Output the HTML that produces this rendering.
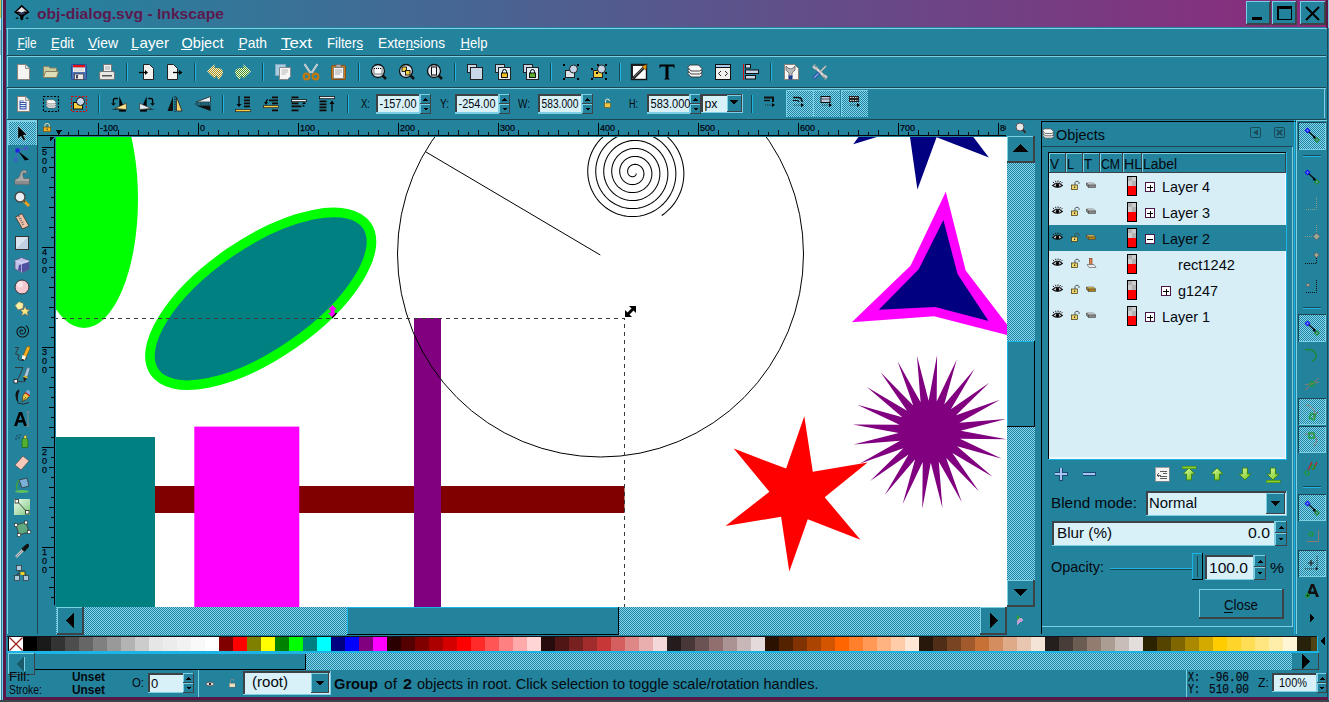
<!DOCTYPE html>
<html><head><meta charset="utf-8"><style>html,body{margin:0;padding:0;overflow:hidden;background:#23839d}svg{display:block}</style></head>
<body><svg width="1329" height="702" viewBox="0 0 1329 702" shape-rendering="crispEdges"><defs>
<linearGradient id="tg" x1="0" y1="0" x2="1" y2="0"><stop offset="0" stop-color="#22859f"/><stop offset="1" stop-color="#8c2a7b"/></linearGradient>
<pattern id="hatch" width="2" height="2" patternUnits="userSpaceOnUse"><rect width="2" height="2" fill="#84d6ec"/><rect width="1" height="1" fill="#2183a0"/><rect x="1" y="1" width="1" height="1" fill="#2183a0"/></pattern>
<linearGradient id="ggrad" x1="0" y1="0" x2="1" y2="1"><stop offset="0" stop-color="#fff" stop-opacity="0.6"/><stop offset="1" stop-color="#60b860" stop-opacity="0.8"/></linearGradient>
<pattern id="dithY" width="2" height="2" patternUnits="userSpaceOnUse"><rect width="2" height="2" fill="#f4f0e0"/><rect width="1" height="1" fill="#a89018"/><rect x="1" y="1" width="1" height="1" fill="#a89018"/></pattern>
<pattern id="dithG" width="2" height="2" patternUnits="userSpaceOnUse"><rect width="2" height="2" fill="#eef4e8"/><rect width="1" height="1" fill="#409020"/><rect x="1" y="1" width="1" height="1" fill="#409020"/></pattern>
<linearGradient id="garr" x1="0" y1="0" x2="1" y2="1"><stop offset="0" stop-color="#e0ffb0"/><stop offset="1" stop-color="#70c010"/></linearGradient>
<clipPath id="cvclip"><rect x="56" y="137" width="951" height="470"/></clipPath>
<clipPath id="rulclip"><rect x="56" y="120" width="950" height="15"/></clipPath>
</defs>
<rect x="0" y="0" width="1329" height="702" fill="#23839d" />
<rect x="6" y="0" width="1320" height="27" fill="url(#tg)" />
<rect x="0" y="0" width="1" height="702" fill="#d0eef4" />
<rect x="0" y="0" width="1" height="18" fill="#e0c040" />
<rect x="0" y="30" width="1" height="25" fill="#a0b8c8" />
<rect x="2" y="0" width="1" height="702" fill="#7dd0e3" />
<rect x="3" y="0" width="3" height="697" fill="#5a1848" />
<rect x="1326" y="0" width="2" height="28" fill="#5a1848" />
<rect x="1328" y="0" width="1" height="28" fill="#7dd0e3" />
<rect x="1327" y="28" width="1" height="669" fill="#1d4654" />
<rect x="3" y="697" width="1325" height="3" fill="#5a1848" />
<rect x="0" y="700" width="1329" height="2" fill="#39464a" />
<text x="37" y="19" font-family="Liberation Sans" font-size="15" font-weight="bold" fill="#5b1a4e" text-anchor="start" textLength="187" lengthAdjust="spacingAndGlyphs" >obj-dialog.svg - Inkscape</text>
<g shape-rendering="geometricPrecision"><path d="M21.8 4.8 L29.6 12.3 L26 14.6 L23.6 16.2 L23.2 19.2 L21.8 20.6 L20.4 19.2 L20 16.2 L17.6 14.6 L14 12.3 Z" fill="#000"/><path d="M21.8 6.9 L27.2 12 L24.5 11.2 L21.5 12.8 L18.8 11.6 L16.4 12 Z" fill="#e4e4e8"/><path d="M19 12.5 L21.5 13 L24 12 L25.5 13.5 L21.8 15 L18 13.5 Z" fill="#2a3a6a"/><rect x="15.8" y="17.6" width="2.4" height="1.2" fill="#000"/><rect x="26" y="17.6" width="2.4" height="1.2" fill="#000"/></g>
<rect x="1246" y="1" width="25" height="24" fill="#23839d" />
<rect x="1246" y="1" width="25" height="1" fill="#7dd0e3" />
<rect x="1246" y="1" width="1" height="24" fill="#7dd0e3" />
<rect x="1246" y="24" width="25" height="1" fill="#3c4246" />
<rect x="1270" y="1" width="1" height="24" fill="#3c4246" />
<rect x="1247" y="23" width="24" height="1" fill="#3c4246" />
<rect x="1269" y="2" width="1" height="23" fill="#3c4246" />
<rect x="1272" y="1" width="25" height="24" fill="#23839d" />
<rect x="1272" y="1" width="25" height="1" fill="#7dd0e3" />
<rect x="1272" y="1" width="1" height="24" fill="#7dd0e3" />
<rect x="1272" y="24" width="25" height="1" fill="#3c4246" />
<rect x="1296" y="1" width="1" height="24" fill="#3c4246" />
<rect x="1273" y="23" width="24" height="1" fill="#3c4246" />
<rect x="1295" y="2" width="1" height="23" fill="#3c4246" />
<rect x="1300" y="1" width="26" height="24" fill="#23839d" />
<rect x="1300" y="1" width="26" height="1" fill="#7dd0e3" />
<rect x="1300" y="1" width="1" height="24" fill="#7dd0e3" />
<rect x="1300" y="24" width="26" height="1" fill="#3c4246" />
<rect x="1325" y="1" width="1" height="24" fill="#3c4246" />
<rect x="1301" y="23" width="25" height="1" fill="#3c4246" />
<rect x="1324" y="2" width="1" height="23" fill="#3c4246" />
<rect x="1252" y="17" width="10" height="3" fill="#000" />
<rect x="1277.75" y="6.75" width="13.5" height="12.5" fill="none" stroke="#000" stroke-width="1.5"/>
<rect x="1277" y="6" width="15" height="3" fill="#000" />
<path d="M1306 7 L1319 20 M1319 7 L1306 20" stroke="#000" stroke-width="2" shape-rendering="geometricPrecision"/>
<rect x="6" y="28" width="1321" height="1" fill="#7dd0e3" />
<rect x="7" y="28" width="1" height="27" fill="#7dd0e3" />
<rect x="7" y="55" width="1319" height="1" fill="#1d4654" />
<text x="17.5" y="48" font-family="Liberation Sans" font-size="15" font-weight="normal" fill="#ffffff" text-anchor="start" textLength="19" lengthAdjust="spacingAndGlyphs" >File</text>
<text x="51" y="48" font-family="Liberation Sans" font-size="15" font-weight="normal" fill="#ffffff" text-anchor="start" textLength="23" lengthAdjust="spacingAndGlyphs" >Edit</text>
<text x="88" y="48" font-family="Liberation Sans" font-size="15" font-weight="normal" fill="#ffffff" text-anchor="start" textLength="30" lengthAdjust="spacingAndGlyphs" >View</text>
<text x="131" y="48" font-family="Liberation Sans" font-size="15" font-weight="normal" fill="#ffffff" text-anchor="start" textLength="38" lengthAdjust="spacingAndGlyphs" >Layer</text>
<text x="181.5" y="48" font-family="Liberation Sans" font-size="15" font-weight="normal" fill="#ffffff" text-anchor="start" textLength="42" lengthAdjust="spacingAndGlyphs" >Object</text>
<text x="238.5" y="48" font-family="Liberation Sans" font-size="15" font-weight="normal" fill="#ffffff" text-anchor="start" textLength="28.5" lengthAdjust="spacingAndGlyphs" >Path</text>
<text x="281" y="48" font-family="Liberation Sans" font-size="15" font-weight="normal" fill="#ffffff" text-anchor="start" textLength="31" lengthAdjust="spacingAndGlyphs" >Text</text>
<text x="327" y="48" font-family="Liberation Sans" font-size="15" font-weight="normal" fill="#ffffff" text-anchor="start" textLength="36" lengthAdjust="spacingAndGlyphs" >Filters</text>
<text x="378" y="48" font-family="Liberation Sans" font-size="15" font-weight="normal" fill="#ffffff" text-anchor="start" textLength="67" lengthAdjust="spacingAndGlyphs" >Extensions</text>
<text x="460.5" y="48" font-family="Liberation Sans" font-size="15" font-weight="normal" fill="#ffffff" text-anchor="start" textLength="27" lengthAdjust="spacingAndGlyphs" >Help</text>
<rect x="17" y="49" width="8" height="1" fill="#ffffff" />
<rect x="51" y="49" width="8" height="1" fill="#ffffff" />
<rect x="88" y="49" width="9" height="1" fill="#ffffff" />
<rect x="131" y="49" width="7" height="1" fill="#ffffff" />
<rect x="181" y="49" width="11" height="1" fill="#ffffff" />
<rect x="238" y="49" width="8" height="1" fill="#ffffff" />
<rect x="281" y="49" width="10" height="1" fill="#ffffff" />
<rect x="356" y="49" width="7" height="1" fill="#ffffff" />
<rect x="406" y="49" width="8" height="1" fill="#ffffff" />
<rect x="460" y="49" width="10" height="1" fill="#ffffff" />
<rect x="7" y="56" width="1319" height="1" fill="#7dd0e3" />
<rect x="7" y="56" width="1" height="32" fill="#7dd0e3" />
<rect x="7" y="87" width="1319" height="1" fill="#1d4654" />
<rect x="7" y="88" width="1319" height="1" fill="#7dd0e3" />
<rect x="7" y="88" width="1" height="32" fill="#7dd0e3" />
<rect x="7" y="119" width="1319" height="1" fill="#1d4654" />
<rect x="126" y="63" width="1" height="18" fill="#1d4654" />
<rect x="127" y="63" width="1" height="18" fill="#1cb4e4" />
<rect x="194" y="63" width="1" height="18" fill="#1d4654" />
<rect x="195" y="63" width="1" height="18" fill="#1cb4e4" />
<rect x="262" y="63" width="1" height="18" fill="#1d4654" />
<rect x="263" y="63" width="1" height="18" fill="#1cb4e4" />
<rect x="358" y="63" width="1" height="18" fill="#1d4654" />
<rect x="359" y="63" width="1" height="18" fill="#1cb4e4" />
<rect x="454" y="63" width="1" height="18" fill="#1d4654" />
<rect x="455" y="63" width="1" height="18" fill="#1cb4e4" />
<rect x="550" y="63" width="1" height="18" fill="#1d4654" />
<rect x="551" y="63" width="1" height="18" fill="#1cb4e4" />
<rect x="619" y="63" width="1" height="18" fill="#1d4654" />
<rect x="620" y="63" width="1" height="18" fill="#1cb4e4" />
<rect x="770" y="63" width="1" height="18" fill="#1d4654" />
<rect x="771" y="63" width="1" height="18" fill="#1cb4e4" />
<rect x="98" y="95" width="1" height="18" fill="#1d4654" />
<rect x="99" y="95" width="1" height="18" fill="#1cb4e4" />
<rect x="222" y="95" width="1" height="18" fill="#1d4654" />
<rect x="223" y="95" width="1" height="18" fill="#1cb4e4" />
<rect x="347" y="95" width="1" height="18" fill="#1d4654" />
<rect x="348" y="95" width="1" height="18" fill="#1cb4e4" />
<rect x="751" y="95" width="1" height="18" fill="#1d4654" />
<rect x="752" y="95" width="1" height="18" fill="#1cb4e4" />
<rect x="786" y="90" width="27" height="27" fill="url(#hatch)" />
<rect x="786" y="90" width="27" height="1" fill="#7dd0e3" />
<rect x="786" y="90" width="1" height="27" fill="#7dd0e3" />
<rect x="813" y="90" width="27" height="27" fill="url(#hatch)" />
<rect x="813" y="90" width="27" height="1" fill="#7dd0e3" />
<rect x="813" y="90" width="1" height="27" fill="#7dd0e3" />
<rect x="841" y="90" width="27" height="27" fill="url(#hatch)" />
<rect x="841" y="90" width="27" height="1" fill="#7dd0e3" />
<rect x="841" y="90" width="1" height="27" fill="#7dd0e3" />
<g transform="translate(16 64)" shape-rendering="geometricPrecision"><path d="M1.5 0.5 H9.5 L13.5 4.5 V15.5 H1.5 Z" fill="#f4f4f2" stroke="#8a8078" stroke-width="1"/><path d="M9.5 0.5 V4.5 H13.5" fill="#ddd" stroke="#8a8078" stroke-width="0.8"/></g>
<g transform="translate(43 64)" shape-rendering="geometricPrecision"><path d="M0.5 2.5 H5.5 L7 4 H13.5 V13.5 H0.5 Z" fill="#c8cca0" stroke="#8a8060" stroke-width="1"/><path d="M2.5 7.5 H15.5 L13.5 13.5 H0.5 Z" fill="#dcdfb8" stroke="#8a8060" stroke-width="1"/></g>
<g transform="translate(71 64)" shape-rendering="geometricPrecision"><rect x="0.5" y="0.5" width="15" height="15" rx="1" fill="#4a70b8" stroke="#2a4a90" stroke-width="1"/><rect x="2" y="1" width="12" height="2.5" fill="#e01010"/><rect x="2" y="3.5" width="12" height="4.5" fill="#f0f0f0"/><path d="M3 5 H13 M3 6.8 H13" stroke="#bbb" stroke-width="0.6"/><rect x="3.5" y="10" width="9" height="5.5" fill="#e8e8e8" stroke="#444" stroke-width="0.8"/><rect x="5" y="11" width="2" height="3.5" fill="#446"/></g>
<g transform="translate(99 64)" shape-rendering="geometricPrecision"><rect x="4.5" y="0.5" width="8" height="7" fill="#f0f0f0" stroke="#777" stroke-width="1"/><path d="M6 3 H11 M6 5 H11" stroke="#999" stroke-width="0.8"/><rect x="0.5" y="7.5" width="15" height="8" rx="1.5" fill="#e8e8e4" stroke="#777" stroke-width="1"/><rect x="3" y="11" width="10" height="1.5" fill="#555"/></g>
<g transform="translate(139 64)" shape-rendering="geometricPrecision"><path d="M4.5 0.5 H10.5 L14.5 4.5 V15.5 H4.5 Z" fill="#f2f2ee" stroke="#222" stroke-width="1"/><path d="M0 8.5 H7" stroke="#000" stroke-width="1.3"/><path d="M6 6 L9 8.5 L6 11 Z" fill="#000"/></g>
<g transform="translate(167 64)" shape-rendering="geometricPrecision"><path d="M0.5 0.5 H6.5 L10.5 4.5 V15.5 H0.5 Z" fill="#f2f2ee" stroke="#222" stroke-width="1"/><path d="M6 8.5 H12" stroke="#000" stroke-width="1.3"/><path d="M12 6 L15.5 8.5 L12 11 Z" fill="#000"/></g>
<g transform="translate(207 64)" shape-rendering="geometricPrecision"><path d="M0 7.3 L7.7 0.3 V4 H11 Q16 4.5 16 8.5 Q15.5 12 11.5 15.8 L9.5 11.5 L7.7 14.4 Z" fill="url(#dithY)"/></g>
<g transform="translate(235 64)" shape-rendering="geometricPrecision"><g transform="translate(16 0) scale(-1 1)"><path d="M0 7.3 L7.7 0.3 V4 H11 Q16 4.5 16 8.5 Q15.5 12 11.5 15.8 L9.5 11.5 L7.7 14.4 Z" fill="url(#dithG)"/></g></g>
<g transform="translate(275 64)" shape-rendering="geometricPrecision"><rect x="0.5" y="0.5" width="10" height="11" fill="#a8cce0" stroke="#80a8c0" stroke-width="1"/><path d="M4.5 3.5 H15.5 V12.5 L12.5 15.5 H4.5 Z" fill="#f6f6f6" stroke="#888" stroke-width="1"/><path d="M6.5 6 H13 M6.5 8 H13 M6.5 10 H11" stroke="#aaa" stroke-width="0.8"/></g>
<g transform="translate(303 64)" shape-rendering="geometricPrecision"><path d="M1.5 0 L7.5 9 M14.5 0 L8.5 9" stroke="#e8e8e8" stroke-width="2"/><path d="M1.5 0 L7.5 9 M14.5 0 L8.5 9" stroke="#888" stroke-width="0.5"/><circle cx="3.5" cy="12.5" r="2.8" fill="none" stroke="#c07810" stroke-width="2.2"/><circle cx="12.5" cy="12.5" r="2.8" fill="none" stroke="#c07810" stroke-width="2.2"/></g>
<g transform="translate(331 64)" shape-rendering="geometricPrecision"><rect x="0.5" y="1.5" width="14" height="14" rx="1.5" fill="#c88020" stroke="#8a5010" stroke-width="1"/><rect x="2.5" y="3.5" width="10" height="11" fill="#f4f4f4" stroke="#777" stroke-width="0.8"/><rect x="5" y="0.5" width="5" height="3" fill="#aaa" stroke="#666" stroke-width="0.6"/><path d="M4 6 H11 M4 8 H11 M4 10 H9" stroke="#999" stroke-width="0.8"/></g>
<g transform="translate(371 64)" shape-rendering="geometricPrecision"><circle cx="7" cy="7" r="6.5" fill="#dfe8f0" stroke="#111" stroke-width="1.3"/><rect x="3" y="4.5" width="8" height="5.5" fill="#fff" stroke="#000" stroke-width="1" stroke-dasharray="1 1"/><path d="M11.5 11.5 L15 15" stroke="#111" stroke-width="2.5"/></g>
<g transform="translate(399 64)" shape-rendering="geometricPrecision"><circle cx="7" cy="7" r="6.5" fill="#dfe8f0" stroke="#111" stroke-width="1.3"/><rect x="3" y="3" width="4.5" height="4.5" fill="#f0d040" stroke="#000" stroke-width="0.8"/><rect x="6.5" y="6.5" width="4.5" height="4.5" fill="#f0d040" stroke="#000" stroke-width="0.8"/><path d="M11.5 11.5 L15 15" stroke="#111" stroke-width="2.5"/></g>
<g transform="translate(427 64)" shape-rendering="geometricPrecision"><circle cx="7" cy="7" r="6.5" fill="#dfe8f0" stroke="#111" stroke-width="1.3"/><rect x="4.5" y="3" width="5" height="8" fill="#f4f4f4" stroke="#000" stroke-width="1"/><path d="M11.5 11.5 L15 15" stroke="#111" stroke-width="2.5"/></g>
<g transform="translate(467 64)" shape-rendering="geometricPrecision"><rect x="0.5" y="0.5" width="9" height="8" fill="#c8d8e8" stroke="#222" stroke-width="1"/><rect x="3.5" y="3.5" width="12" height="12" fill="#c8d8e8" stroke="#222" stroke-width="1"/></g>
<g transform="translate(495 64)" shape-rendering="geometricPrecision"><rect x="0.5" y="0.5" width="9" height="8" fill="#c8d8e8" stroke="#222" stroke-width="1"/><rect x="3.5" y="3.5" width="12" height="12" fill="#e0ecf4" stroke="#222" stroke-width="1"/><rect x="6.5" y="9" width="6" height="4.5" fill="#f0c020" stroke="#000" stroke-width="0.9"/><path d="M7.5 9 V7.5 A2 2 0 0 1 11.5 7.5 V9" fill="none" stroke="#000" stroke-width="1"/></g>
<g transform="translate(523 64)" shape-rendering="geometricPrecision"><rect x="0.5" y="0.5" width="9" height="8" fill="#c8d8e8" stroke="#222" stroke-width="1"/><rect x="3.5" y="3.5" width="12" height="12" fill="#e0ecf4" stroke="#222" stroke-width="1"/><rect x="6.5" y="9" width="6" height="4.5" fill="#60b030" stroke="#000" stroke-width="0.9"/><path d="M7.5 9 V7.5 A2 2 0 0 1 11.5 7.5 V9" fill="none" stroke="#000" stroke-width="1"/></g>
<g transform="translate(563 64)" shape-rendering="geometricPrecision"><rect x="2.5" y="6.5" width="9" height="7" fill="#d8e0e8" stroke="#222" stroke-width="1"/><circle cx="10.5" cy="5" r="4" fill="#c4d4e4" stroke="#222" stroke-width="1"/><rect x="0" y="0" width="2" height="2" fill="#000"/><rect x="14" y="0" width="2" height="2" fill="#000"/><rect x="0" y="14" width="2" height="2" fill="#000"/><rect x="14" y="14" width="2" height="2" fill="#000"/></g>
<g transform="translate(591 64)" shape-rendering="geometricPrecision"><rect x="2.5" y="6.5" width="9" height="7" fill="#f0d040" stroke="#222" stroke-width="1"/><circle cx="10.5" cy="5" r="4" fill="#c4d4e4" stroke="#222" stroke-width="1"/><rect x="0" y="4" width="2" height="2" fill="#000"/><rect x="14" y="8" width="2" height="2" fill="#000"/><rect x="0" y="14" width="2" height="2" fill="#000"/><rect x="14" y="14" width="2" height="2" fill="#000"/><rect x="6" y="0" width="2" height="2" fill="#000"/><rect x="14" y="0" width="2" height="2" fill="#000"/><rect x="5" y="8" width="2" height="2" fill="#000"/></g>
<g transform="translate(631 64)" shape-rendering="geometricPrecision"><rect x="0.5" y="0.5" width="15" height="15" fill="#fdfdfd" stroke="#111" stroke-width="1.4"/><path d="M0.5 0.5 H15.5 L14 2 H2 V14 L0.5 15.5 Z" fill="#222"/><path d="M2 14.5 L13 3.5" stroke="#222" stroke-width="3"/><path d="M3 13 L12 4" stroke="#888" stroke-width="0.8"/><path d="M11 2.5 L15.5 0.5 L15 6 L13.5 5 Z" fill="#f4a010" stroke="#604010" stroke-width="0.5"/></g>
<g transform="translate(659 64)" shape-rendering="geometricPrecision"><path d="M0.5 0.5 H15.5 V4.5 L14 2.5 H9.5 V14 L11 15.5 H5 L6.5 14 V2.5 H2 L0.5 4.5 Z" fill="#000"/></g>
<g transform="translate(687 64)" shape-rendering="geometricPrecision"><path d="M0.5 9 L3.5 7 H11.5 L15.5 11 L12.5 13 H4 Z" fill="#f8f8f8" stroke="#333" stroke-width="0.9"/><path d="M0.5 6 L3.5 4 H11.5 L15.5 8 L12.5 10 H4 Z" fill="#f8f8f8" stroke="#333" stroke-width="0.9"/><path d="M0.5 3 L3.5 1 H11.5 L15.5 5 L12.5 7 H4 Z" fill="#f8f8f8" stroke="#333" stroke-width="0.9"/></g>
<g transform="translate(715 64)" shape-rendering="geometricPrecision"><rect x="0.5" y="0.5" width="15" height="15" fill="#f0f0ec" stroke="#111" stroke-width="1"/><rect x="1" y="1" width="14" height="2.5" fill="#a8c8e8"/><path d="M1 3.5 H15" stroke="#111" stroke-width="1"/><path d="M6 7 L3.5 9.5 L6 12 M10 7 L12.5 9.5 L10 12" fill="none" stroke="#222" stroke-width="1"/></g>
<g transform="translate(743 64)" shape-rendering="geometricPrecision"><rect x="0" y="0" width="1" height="16" fill="#d01010"/><rect x="2.5" y="0.5" width="5" height="3.5" fill="#c8d8ec" stroke="#111" stroke-width="1"/><rect x="2.5" y="6" width="13" height="3.5" fill="#c8d8ec" stroke="#111" stroke-width="1"/><rect x="2.5" y="11.5" width="10" height="3.5" fill="#c8d8ec" stroke="#111" stroke-width="1"/></g>
<g transform="translate(784 64)" shape-rendering="geometricPrecision"><path d="M0.5 0.5 H10.5 L14.5 4.5 V15.5 H0.5 Z" fill="#f4f4f2" stroke="#8a8078" stroke-width="1"/><path d="M2 2 L2 6 L5 9 V13 H8 V9 L11 6 V2 L9 4 L7 5 L4 4 Z" fill="#bbb" stroke="#555" stroke-width="0.7"/><rect x="4.5" y="11.5" width="4" height="4" fill="#1a3a90"/></g>
<g transform="translate(812 64)" shape-rendering="geometricPrecision"><path d="M3 3 L13 13" stroke="#999" stroke-width="3"/><path d="M3 3 L13 13" stroke="#e8e8e8" stroke-width="1.6"/><path d="M0.5 3.5 Q1 0.5 3.5 0.5 L2.5 2.5 L3.5 3.5 L5.5 2.5 Q5.5 5 3 5.5 Z" fill="#e0e0e0" stroke="#888" stroke-width="0.6"/><path d="M15.5 12.5 Q15 15.5 12.5 15.5 L13.5 13.5 L12.5 12.5 L10.5 13.5 Q10.5 11 13 10.5 Z" fill="#e0e0e0" stroke="#888" stroke-width="0.6"/><path d="M8 8 L14 2" stroke="#999" stroke-width="1.8"/><path d="M8 8 L14 2" stroke="#ddd" stroke-width="0.8"/><path d="M1.5 14.5 L7 9" stroke="#2a50a0" stroke-width="3.4"/><path d="M2 14 L6.5 9.5" stroke="#7aa8e8" stroke-width="1.5"/></g>
<g transform="translate(16 96)" shape-rendering="geometricPrecision"><path d="M1.5 0.5 H9.5 L13.5 4.5 V15.5 H1.5 Z" fill="#f4f4f2" stroke="#8a8078" stroke-width="1"/><path d="M9.5 0.5 V4.5 H13.5" fill="#ddd" stroke="#8a8078" stroke-width="0.8"/><path d="M3.5 4.5 H7.5 V6 H10.5 V13.5 H3.5 Z" fill="#3058b0"/><path d="M4.5 5.3 H6.8 M4.5 7.5 H9.6 M4.5 9.6 H9.6 M4.5 11.8 H9.6" stroke="#fff" stroke-width="1"/></g>
<g transform="translate(43 96)" shape-rendering="geometricPrecision"><rect x="0.5" y="0.5" width="15" height="15" fill="none" stroke="#000" stroke-width="1.1" stroke-dasharray="2 1.5"/><g transform="translate(2.5 3) scale(0.7)"><path d="M0.5 9 L3.5 7 H11.5 L15.5 11 L12.5 13 H4 Z" fill="#f8f8f8" stroke="#555" stroke-width="0.9"/><path d="M0.5 6 L3.5 4 H11.5 L15.5 8 L12.5 10 H4 Z" fill="#f8f8f8" stroke="#555" stroke-width="0.9"/><path d="M0.5 3 L3.5 1 H11.5 L15.5 5 L12.5 7 H4 Z" fill="#f8f8f8" stroke="#555" stroke-width="0.9"/></g></g>
<g transform="translate(71 96)" shape-rendering="geometricPrecision"><rect x="0.5" y="0.5" width="15" height="15" fill="none" stroke="#e00000" stroke-width="1.1" stroke-dasharray="2 1.5"/><rect x="2.5" y="6.5" width="9" height="6.5" fill="#f8d040" stroke="#111" stroke-width="1"/><circle cx="9.5" cy="5.5" r="4" fill="#c8d8ec" stroke="#111" stroke-width="1"/></g>
<g transform="translate(111 96)" shape-rendering="geometricPrecision"><path d="M8.3 0.2 L12.8 10.5 L8.3 12.5 Z" fill="#000"/><path d="M0 13.6 L15.4 13.6 L9 12 Z" fill="#000"/><rect x="8.1" y="13.8" width="6.8" height="1.8" fill="#000"/><path d="M3.8 12.5 L15.4 7.3 V13.5 Z" fill="#fbe690" stroke="#3a3020" stroke-width="0.7"/><path d="M6.8 2.5 H4 Q2.4 2.5 2.4 4.2 V7" fill="none" stroke="#000" stroke-width="1.3"/><path d="M0.1 7.2 H4.8 L2.45 9.8 Z" fill="#000"/></g>
<g transform="translate(139 96)" shape-rendering="geometricPrecision"><g transform="translate(16 0) scale(-1 1)"><path d="M8.3 0.2 L12.8 10.5 L8.3 12.5 Z" fill="#000"/><path d="M0 13.6 L15.4 13.6 L9 12 Z" fill="#000"/><rect x="8.1" y="13.8" width="6.8" height="1.8" fill="#000"/><path d="M3.8 12.5 L15.4 7.3 V13.5 Z" fill="#e0ecf6" stroke="#3a3020" stroke-width="0.7"/><path d="M6.8 2.5 H4 Q2.4 2.5 2.4 4.2 V7" fill="none" stroke="#000" stroke-width="1.3"/><path d="M0.1 7.2 H4.8 L2.45 9.8 Z" fill="#000"/></g></g>
<g transform="translate(167 96)" shape-rendering="geometricPrecision"><path d="M6 0.5 V15 H0.5 Z" fill="#111"/><path d="M9.5 1 L15 15 H9.5 Z" fill="#f4d070" stroke="#222" stroke-width="0.8"/><path d="M8 0 V16" stroke="#111" stroke-width="1" stroke-dasharray="1.5 1"/></g>
<g transform="translate(195 96)" shape-rendering="geometricPrecision"><path d="M15.5 0.5 V6 H1 Z" fill="#e4eef6" stroke="#222" stroke-width="0.8"/><path d="M15.5 15 V9.5 H1 Z" fill="#111"/><path d="M0 8 H16" stroke="#111" stroke-width="1" stroke-dasharray="1.5 1"/></g>
<g transform="translate(235 96)" shape-rendering="geometricPrecision"><rect x="9" y="0.5" width="6" height="1.8" fill="#140a06"/><rect x="9" y="3.5" width="6" height="1.8" fill="#140a06"/><rect x="9" y="6.5" width="6" height="1.8" fill="#140a06"/><rect x="9" y="9.5" width="6" height="1.8" fill="#140a06"/><rect x="0.5" y="13.5" width="15" height="2.2" fill="#f8cc40" stroke="#222" stroke-width="0.7"/><path d="M4 0 V10" stroke="#000" stroke-width="1.2"/><path d="M1.5 8 H6.5 L4 11 Z" fill="#000"/></g>
<g transform="translate(263 96)" shape-rendering="geometricPrecision"><rect x="9" y="0.5" width="6" height="1.8" fill="#140a06"/><rect x="6" y="3.5" width="9" height="1.8" fill="#140a06"/><rect x="9" y="6.5" width="6" height="1.8" fill="#140a06"/><rect x="0.5" y="9.5" width="15" height="2.2" fill="#f8cc40" stroke="#222" stroke-width="0.7"/><rect x="9" y="13.5" width="6" height="1.8" fill="#140a06"/><path d="M3 7 Q3 4 5 3.5" fill="none" stroke="#000" stroke-width="1.2"/><path d="M1 6 H5 L3 9 Z" fill="#000"/></g>
<g transform="translate(291 96)" shape-rendering="geometricPrecision"><rect x="0.5" y="0.5" width="7" height="1.8" fill="#140a06"/><rect x="0.5" y="3.5" width="15" height="2.2" fill="#f0f0f4" stroke="#111" stroke-width="0.8"/><rect x="0.5" y="6.5" width="7" height="1.8" fill="#140a06"/><rect x="0.5" y="9.5" width="10" height="1.8" fill="#140a06"/><rect x="0.5" y="13.5" width="7" height="1.8" fill="#140a06"/><path d="M13 11 Q13 9 11.5 9" fill="none" stroke="#000" stroke-width="1.2"/><path d="M11 8 L15 8 L13 6 Z" fill="#000"/></g>
<g transform="translate(319 96)" shape-rendering="geometricPrecision"><rect x="0.5" y="0.5" width="15" height="2.2" fill="#f0f0f4" stroke="#111" stroke-width="0.8"/><rect x="0.5" y="4.5" width="7" height="1.8" fill="#140a06"/><rect x="0.5" y="7.5" width="7" height="1.8" fill="#140a06"/><rect x="0.5" y="10.5" width="7" height="1.8" fill="#140a06"/><rect x="0.5" y="13.5" width="7" height="1.8" fill="#140a06"/><path d="M13 15.5 V6" stroke="#000" stroke-width="1.2"/><path d="M10.5 8 H15.5 L13 4.5 Z" fill="#000"/></g>
<g transform="translate(764 96)" shape-rendering="geometricPrecision"><path d="M0 1.5 H9 V6" fill="none" stroke="#111" stroke-width="2"/><path d="M0 4.5 H6" stroke="#111" stroke-width="1.5"/><path d="M1 9 H9" stroke="#111" stroke-width="0.8" stroke-dasharray="1 1.2"/><path d="M8 7 L11 9 L8 11 Z" fill="#000"/></g>
<g transform="translate(793 96)" shape-rendering="geometricPrecision"><path d="M0 1.5 H5 Q9 1.5 9 6" fill="none" stroke="#111" stroke-width="1.6"/><path d="M0 4.5 H4 Q6 4.5 6 6" fill="none" stroke="#111" stroke-width="1.2"/><path d="M1 9 H9" stroke="#111" stroke-width="0.8" stroke-dasharray="1 1.2"/><path d="M8 7 L11 9 L8 11 Z" fill="#000"/></g>
<g transform="translate(821 96)" shape-rendering="geometricPrecision"><rect x="0" y="0.5" width="9" height="6" fill="#b8c8d8" stroke="#111" stroke-width="1"/><path d="M0 3 H9" stroke="#556" stroke-width="1"/><path d="M1 9 H9" stroke="#111" stroke-width="0.8" stroke-dasharray="1 1.2"/><path d="M8 7 L11 9 L8 11 Z" fill="#000"/></g>
<g transform="translate(849 96)" shape-rendering="geometricPrecision"><rect x="0" y="0" width="10" height="6" fill="#222"/><path d="M1 1.5 H9 M1 4.5 H9" stroke="#eee" stroke-width="0.9" stroke-dasharray="1.5 1"/><path d="M1 9 H9" stroke="#111" stroke-width="0.8" stroke-dasharray="1 1.2"/><path d="M8 7 L11 9 L8 11 Z" fill="#000"/></g>
<text x="361" y="108" font-family="Liberation Sans" font-size="12" font-weight="normal" fill="#04080e" text-anchor="start" textLength="9" lengthAdjust="spacingAndGlyphs" >X:</text>
<text x="440" y="108" font-family="Liberation Sans" font-size="12" font-weight="normal" fill="#04080e" text-anchor="start" textLength="9" lengthAdjust="spacingAndGlyphs" >Y:</text>
<text x="518" y="108" font-family="Liberation Sans" font-size="12" font-weight="normal" fill="#04080e" text-anchor="start" textLength="12" lengthAdjust="spacingAndGlyphs" >W:</text>
<text x="629" y="108" font-family="Liberation Sans" font-size="12" font-weight="normal" fill="#04080e" text-anchor="start" textLength="9" lengthAdjust="spacingAndGlyphs" >H:</text>
<rect x="376" y="94" width="44" height="19" fill="#d8f0f8" />
<rect x="376" y="94" width="44" height="2" fill="#3c4246" />
<rect x="376" y="94" width="2" height="19" fill="#3c4246" />
<rect x="376" y="112" width="44" height="1" fill="#7dd0e3" />
<rect x="419" y="94" width="1" height="19" fill="#7dd0e3" />
<rect x="376" y="113" width="44" height="1" fill="#7dd0e3" />
<text x="379.5" y="108" font-family="Liberation Sans" font-size="12" font-weight="normal" fill="#04080e" text-anchor="start" textLength="37" lengthAdjust="spacingAndGlyphs" >-157.00</text>
<rect x="420" y="94" width="11" height="10" fill="#23839d" />
<rect x="420" y="94" width="11" height="1" fill="#7dd0e3" />
<rect x="420" y="94" width="1" height="10" fill="#7dd0e3" />
<rect x="420" y="103" width="11" height="1" fill="#3c4246" />
<rect x="430" y="94" width="1" height="10" fill="#3c4246" />
<rect x="420" y="104" width="11" height="10" fill="#23839d" />
<rect x="420" y="104" width="11" height="1" fill="#7dd0e3" />
<rect x="420" y="104" width="1" height="10" fill="#7dd0e3" />
<rect x="420" y="113" width="11" height="1" fill="#3c4246" />
<rect x="430" y="104" width="1" height="10" fill="#3c4246" />
<polygon points="423.0,100.5 428.0,100.5 425.5,98.0" fill="#000"/>
<polygon points="423.0,108.0 428.0,108.0 425.5,110.5" fill="#000"/>
<rect x="455" y="94" width="44" height="19" fill="#d8f0f8" />
<rect x="455" y="94" width="44" height="2" fill="#3c4246" />
<rect x="455" y="94" width="2" height="19" fill="#3c4246" />
<rect x="455" y="112" width="44" height="1" fill="#7dd0e3" />
<rect x="498" y="94" width="1" height="19" fill="#7dd0e3" />
<rect x="455" y="113" width="44" height="1" fill="#7dd0e3" />
<text x="458.5" y="108" font-family="Liberation Sans" font-size="12" font-weight="normal" fill="#04080e" text-anchor="start" textLength="37" lengthAdjust="spacingAndGlyphs" >-254.00</text>
<rect x="499" y="94" width="11" height="10" fill="#23839d" />
<rect x="499" y="94" width="11" height="1" fill="#7dd0e3" />
<rect x="499" y="94" width="1" height="10" fill="#7dd0e3" />
<rect x="499" y="103" width="11" height="1" fill="#3c4246" />
<rect x="509" y="94" width="1" height="10" fill="#3c4246" />
<rect x="499" y="104" width="11" height="10" fill="#23839d" />
<rect x="499" y="104" width="11" height="1" fill="#7dd0e3" />
<rect x="499" y="104" width="1" height="10" fill="#7dd0e3" />
<rect x="499" y="113" width="11" height="1" fill="#3c4246" />
<rect x="509" y="104" width="1" height="10" fill="#3c4246" />
<polygon points="502.0,100.5 507.0,100.5 504.5,98.0" fill="#000"/>
<polygon points="502.0,108.0 507.0,108.0 504.5,110.5" fill="#000"/>
<rect x="538" y="94" width="44" height="19" fill="#d8f0f8" />
<rect x="538" y="94" width="44" height="2" fill="#3c4246" />
<rect x="538" y="94" width="2" height="19" fill="#3c4246" />
<rect x="538" y="112" width="44" height="1" fill="#7dd0e3" />
<rect x="581" y="94" width="1" height="19" fill="#7dd0e3" />
<rect x="538" y="113" width="44" height="1" fill="#7dd0e3" />
<text x="541.5" y="108" font-family="Liberation Sans" font-size="12" font-weight="normal" fill="#04080e" text-anchor="start" textLength="37" lengthAdjust="spacingAndGlyphs" >583.000</text>
<rect x="582" y="94" width="11" height="10" fill="#23839d" />
<rect x="582" y="94" width="11" height="1" fill="#7dd0e3" />
<rect x="582" y="94" width="1" height="10" fill="#7dd0e3" />
<rect x="582" y="103" width="11" height="1" fill="#3c4246" />
<rect x="592" y="94" width="1" height="10" fill="#3c4246" />
<rect x="582" y="104" width="11" height="10" fill="#23839d" />
<rect x="582" y="104" width="11" height="1" fill="#7dd0e3" />
<rect x="582" y="104" width="1" height="10" fill="#7dd0e3" />
<rect x="582" y="113" width="11" height="1" fill="#3c4246" />
<rect x="592" y="104" width="1" height="10" fill="#3c4246" />
<polygon points="585.0,100.5 590.0,100.5 587.5,98.0" fill="#000"/>
<polygon points="585.0,108.0 590.0,108.0 587.5,110.5" fill="#000"/>
<rect x="647" y="94" width="43" height="19" fill="#d8f0f8" />
<rect x="647" y="94" width="43" height="2" fill="#3c4246" />
<rect x="647" y="94" width="2" height="19" fill="#3c4246" />
<rect x="647" y="112" width="43" height="1" fill="#7dd0e3" />
<rect x="689" y="94" width="1" height="19" fill="#7dd0e3" />
<rect x="647" y="113" width="43" height="1" fill="#7dd0e3" />
<text x="650.5" y="108" font-family="Liberation Sans" font-size="12" font-weight="normal" fill="#04080e" text-anchor="start" textLength="40" lengthAdjust="spacingAndGlyphs" >583.000</text>
<rect x="690" y="94" width="11" height="10" fill="#23839d" />
<rect x="690" y="94" width="11" height="1" fill="#7dd0e3" />
<rect x="690" y="94" width="1" height="10" fill="#7dd0e3" />
<rect x="690" y="103" width="11" height="1" fill="#3c4246" />
<rect x="700" y="94" width="1" height="10" fill="#3c4246" />
<rect x="690" y="104" width="11" height="10" fill="#23839d" />
<rect x="690" y="104" width="11" height="1" fill="#7dd0e3" />
<rect x="690" y="104" width="1" height="10" fill="#7dd0e3" />
<rect x="690" y="113" width="11" height="1" fill="#3c4246" />
<rect x="700" y="104" width="1" height="10" fill="#3c4246" />
<polygon points="693.0,100.5 698.0,100.5 695.5,98.0" fill="#000"/>
<polygon points="693.0,108.0 698.0,108.0 695.5,110.5" fill="#000"/>
<g transform="translate(604 99)" shape-rendering="geometricPrecision"><path d="M1.5 4 V2 A2 2 0 0 1 5.5 2" fill="none" stroke="#f8f0d0" stroke-width="1"/><rect x="0.5" y="4" width="6" height="4.5" fill="#f0c840" stroke="#6a5020" stroke-width="0.6"/></g>
<rect x="701" y="94" width="42" height="19" fill="#d8f0f8" />
<rect x="701" y="94" width="42" height="2" fill="#3c4246" />
<rect x="701" y="94" width="2" height="19" fill="#3c4246" />
<rect x="701" y="112" width="42" height="1" fill="#7dd0e3" />
<rect x="742" y="94" width="1" height="19" fill="#7dd0e3" />
<text x="704.5" y="108" font-family="Liberation Sans" font-size="12" font-weight="normal" fill="#04080e" text-anchor="start" textLength="13" lengthAdjust="spacingAndGlyphs" >px</text>
<rect x="727" y="95" width="15" height="17" fill="#23839d" />
<rect x="727" y="95" width="15" height="1" fill="#7dd0e3" />
<rect x="727" y="95" width="1" height="17" fill="#7dd0e3" />
<rect x="727" y="111" width="15" height="1" fill="#3c4246" />
<rect x="741" y="95" width="1" height="17" fill="#3c4246" />
<polygon points="730,100 738,100 734,105" fill="#000"/>
<rect x="7" y="120" width="30" height="1" fill="#7dd0e3" />
<rect x="7" y="120" width="1" height="514" fill="#7dd0e3" />
<rect x="37" y="120" width="1" height="514" fill="#1d4654" />
<rect x="8" y="121" width="28" height="24" fill="url(#hatch)" />
<rect x="8" y="121" width="28" height="1" fill="#7dd0e3" />
<rect x="8" y="121" width="1" height="24" fill="#7dd0e3" />
<rect x="36" y="121" width="1" height="24" fill="#7dd0e3" />
<g transform="translate(14 125)" shape-rendering="geometricPrecision"><path d="M4 1 V14 L7 11 L9.5 15.5 L11.5 14.5 L9 10 H13 Z" fill="#000" stroke="#fff" stroke-width="0.5" stroke-opacity="0.5"/></g>
<g transform="translate(14 147)" shape-rendering="geometricPrecision"><path d="M3.5 3.5 L12.5 1.5 M3.5 3.5 L1.5 12.5" stroke="#5a5ad0" stroke-width="0.8"/><path d="M4 4 L15 12.5 L11 13.5 Z" fill="#000"/><rect x="1.5" y="1.5" width="4" height="4" fill="#2020e0"/><rect x="11" y="0" width="2.5" height="2.5" fill="none" stroke="#4a4ae0" stroke-width="0.7"/><rect x="0.5" y="12" width="2.5" height="2.5" fill="none" stroke="#4a4ae0" stroke-width="0.7"/></g>
<g transform="translate(14 169)" shape-rendering="geometricPrecision"><path d="M1 15.5 V10 Q5 10 6 5.5 Q7 1 10.5 1 Q13.5 1.5 12.8 4.5 L11 4.5 Q10.5 3 9.3 3.8 Q8.2 5.5 9.8 9.5 H15.5 V15.5 Z" fill="#a8a8a8" stroke="#555" stroke-width="0.6"/><rect x="1.5" y="12" width="13.5" height="3.2" fill="#8a8a8a"/></g>
<g transform="translate(14 191)" shape-rendering="geometricPrecision"><circle cx="6" cy="6" r="5" fill="#e8eef4" stroke="#444" stroke-width="1.4"/><path d="M9.5 9.5 L15 15" stroke="#e8a020" stroke-width="3"/><path d="M9.5 9.5 L11 11" stroke="#444" stroke-width="2"/></g>
<g transform="translate(14 213)" shape-rendering="geometricPrecision"><path d="M1.5 4 L8 0.5 L15 13 L8.5 16 Z" fill="#f0c0a8" stroke="#444" stroke-width="1"/><path d="M4 4 L6 3 M5 6 L7.5 5 M6 8 L8 7 M7 10 L9.5 9 M8 12 L10 11" stroke="#555" stroke-width="0.8"/></g>
<g transform="translate(14 235)" shape-rendering="geometricPrecision"><rect x="1.5" y="1.5" width="13" height="13" fill="#d8e4ee" stroke="#333" stroke-width="1"/><path d="M2 14 L14 2 V14 Z" fill="#b0c4d8" opacity="0.6"/></g>
<g transform="translate(14 257)" shape-rendering="geometricPrecision"><path d="M7.5 0.5 L15 3.5 V12.5 L8 15.5 L1 12 V3.5 Z" fill="#c0c0ea" stroke="#5a5a7a" stroke-width="0.8"/><path d="M5 8 L15 5 V12.5 L8 15.5 L4 13 Z" fill="#5050a0"/><path d="M1 3.5 L7.5 6 L15 3.5 M7.5 6 V15.5" fill="none" stroke="#e8e8ff" stroke-width="0.6"/></g>
<g transform="translate(14 279)" shape-rendering="geometricPrecision"><circle cx="8" cy="8" r="7" fill="#f6c8d0" stroke="#333" stroke-width="1"/><circle cx="6" cy="5.5" r="3" fill="#fff" opacity="0.5"/></g>
<g transform="translate(14 301)" shape-rendering="geometricPrecision"><path d="M5 0.5 L9.5 2.5 L9 7.5 L4 9 L1 4.5 Z" fill="#f8f0a0" stroke="#666" stroke-width="0.7"/><path d="M11 5 L12.5 8.5 L16 8.7 L13.3 11 L14.3 15 L11 12.8 L7.5 15 L8.6 11 L6 8.7 L9.5 8.5 Z" fill="#f8e880" stroke="#666" stroke-width="0.7"/></g>
<g transform="translate(14 323)" shape-rendering="geometricPrecision"><polyline points="8.38,8.35 8.44,8.31 8.50,8.25 8.54,8.18 8.58,8.10 8.60,8.00 8.61,7.90 8.60,7.79 8.58,7.68 8.53,7.57 8.47,7.46 8.39,7.36 8.29,7.26 8.17,7.18 8.04,7.11 7.89,7.06 7.73,7.02 7.56,7.01 7.39,7.02 7.21,7.05 7.03,7.11 6.85,7.20 6.68,7.31 6.52,7.44 6.38,7.61 6.25,7.79 6.14,7.99 6.06,8.21 6.01,8.45 5.98,8.70 5.99,8.96 6.03,9.22 6.11,9.48 6.22,9.73 6.36,9.97 6.54,10.20 6.75,10.41 6.99,10.60 7.25,10.76 7.54,10.89 7.85,10.98 8.18,11.04 8.52,11.06 8.86,11.03 9.20,10.96 9.54,10.84 9.87,10.69 10.19,10.49 10.48,10.24 10.74,9.96 10.97,9.65 11.17,9.30 11.32,8.92 11.43,8.53 11.49,8.11 11.50,7.68 11.45,7.25 11.36,6.82 11.21,6.40 11.00,6.00 10.75,5.61 10.44,5.26 10.09,4.94 9.70,4.66 9.27,4.43 8.81,4.25 8.32,4.13 7.82,4.06 7.30,4.06 6.78,4.12 6.27,4.24 5.76,4.43 5.28,4.68 4.83,4.99 4.41,5.35 4.03,5.77 3.71,6.24 3.44,6.75 3.23,7.30 3.08,7.87 3.01,8.46 3.01,9.07 3.08,9.68 3.23,10.28 3.45,10.86 3.74,11.42 4.10,11.95 4.53,12.43 5.02,12.87 5.56,13.24 6.15,13.55 6.78,13.79 7.44,13.96 8.13,14.04 8.82,14.04 9.52,13.96 10.20,13.79 10.87,13.53 11.51,13.20 12.11,12.79 12.66,12.30 13.16,11.74 13.58,11.13 13.94,10.46 14.21,9.75 14.39,9.00 14.49,8.23 14.49,7.44 14.40,6.66 14.21,5.88 13.93,5.13 13.55,4.41 13.09,3.74 12.54,3.12 11.92,2.56" fill="none" stroke="#111" stroke-width="1.05"/></g>
<g transform="translate(14 345)" shape-rendering="geometricPrecision"><path d="M1 2.5 H4.5 L1.5 9 L5 10 L4 14 Q6 17 13 13" fill="none" stroke="#333" stroke-width="0.9"/><path d="M8 13.5 L12.5 2.5 Q14 0.5 15.5 1.5 Q16.5 3 15.5 5 L10.5 15 Z" fill="#f8b020" stroke="#6a4a10" stroke-width="0.6"/><path d="M8.3 10 L12 11.5 L10.5 15 L8 14 Z" fill="#fafaf0"/><path d="M8 14 L10.5 15 L8.3 16 Z" fill="#000"/></g>
<g transform="translate(14 367)" shape-rendering="geometricPrecision"><path d="M1 0.5 H9 L5.5 9 L3 13.5" fill="none" stroke="#333" stroke-width="0.9"/><path d="M1.5 14 L9.5 15" stroke="#333" stroke-width="0.9"/><rect x="0" y="12.5" width="3.5" height="3.5" fill="#fff" stroke="#222" stroke-width="0.8"/><path d="M10 9 L13 1 Q15 0 16 1.5 L13.5 10 Z" fill="#a8c8e0" stroke="#4a5a6a" stroke-width="0.6"/><path d="M9.8 8.5 L13.6 10 L13 11.5 L9.3 10 Z" fill="#f0c020"/><path d="M9.3 10 L13 11.5 L10 15.5 Z" fill="#222"/></g>
<g transform="translate(14 389)" shape-rendering="geometricPrecision"><path d="M5 0.5 Q1 2 1.5 7 Q2 12 4.5 13.5 Q3 9 4.5 4 Q6 1.5 5 0.5 Z" fill="#111"/><path d="M3.5 14 Q9 16.5 15 13.5" fill="none" stroke="#222" stroke-width="0.9"/><path d="M8 13 L9 6 L12 3.5 L15.5 7 L13 10 Z" fill="#f0c840" stroke="#332" stroke-width="0.7"/><path d="M11.5 3 L14 0.5 L16 2.5 L15.8 6.5 Z" fill="#80a8d8"/><path d="M11 3.5 L15.8 6.8" stroke="#d02020" stroke-width="1.2"/><path d="M8 13 L12 8" stroke="#332" stroke-width="0.7"/></g>
<g transform="translate(14 411)" shape-rendering="geometricPrecision"><path d="M0 15 L5 1 H8 L13 15 H10 L9 11.5 H4 L3 15 Z M4.8 9 H8.2 L6.5 4 Z" fill="#000"/><path d="M12.5 1 H15.5 M14 1 V15 M12.5 15 H15.5" stroke="#888" stroke-width="1"/></g>
<g transform="translate(14 433)" shape-rendering="geometricPrecision"><path d="M8 7 Q8 5 11 5 Q14 5 14 8 V14.5 H8 Z" fill="#50b030" stroke="#2a6a20" stroke-width="0.8"/><rect x="10" y="2.5" width="2.5" height="3" fill="#f0e040" stroke="#555" stroke-width="0.5"/><circle cx="3" cy="3" r="0.7" fill="#224"/><circle cx="6" cy="2" r="0.7" fill="#224"/><circle cx="5" cy="5" r="0.7" fill="#224"/><circle cx="2" cy="6" r="0.7" fill="#224"/></g>
<g transform="translate(14 455)" shape-rendering="geometricPrecision"><path d="M1 10 L9 1 L15 6 L7 15 Z" fill="#f8c8b8" stroke="#555" stroke-width="0.8"/></g>
<g transform="translate(14 477)" shape-rendering="geometricPrecision"><ellipse cx="8" cy="14.5" rx="7" ry="1.5" fill="#60c060"/><path d="M5 3 L13 1 L15 9 L8 11 Z" fill="#7ab0d8" stroke="#333" stroke-width="0.8"/><path d="M5 3 Q2 6 3 13" fill="none" stroke="#40a040" stroke-width="1.5"/></g>
<g transform="translate(14 499)" shape-rendering="geometricPrecision"><rect x="0" y="0" width="16" height="16" fill="#c8f0c8"/><rect x="0" y="0" width="16" height="16" fill="url(#ggrad)"/><path d="M3 2 L13 13" stroke="#222" stroke-width="0.8"/><rect x="1" y="0.5" width="3.5" height="3.5" fill="#fff" stroke="#222" stroke-width="0.8"/><rect x="11.5" y="11.5" width="3.5" height="3.5" fill="#fff" stroke="#222" stroke-width="0.8"/></g>
<g transform="translate(14 521)" shape-rendering="geometricPrecision"><path d="M2 4 L12 1 L15 11 L5 14 Z" fill="#60a880" stroke="#333" stroke-width="0.8"/><rect x="0.5" y="2.5" width="3" height="3" fill="#fff" stroke="#222" stroke-width="0.6"/><rect x="10.5" y="0" width="3" height="3" fill="#fff" stroke="#222" stroke-width="0.6"/><rect x="13.5" y="9.5" width="3" height="3" fill="#fff" stroke="#222" stroke-width="0.6"/><rect x="3.5" y="12.5" width="3" height="3" fill="#fff" stroke="#222" stroke-width="0.6"/></g>
<g transform="translate(14 543)" shape-rendering="geometricPrecision"><path d="M2 14 L10 6" stroke="#ccc" stroke-width="2.5"/><path d="M2 14 L10 6" stroke="#555" stroke-width="0.6"/><path d="M9 4 L12 1.5 Q14.5 0 15 2 Q15.5 4 13 6 L11 8 Z" fill="#111"/><path d="M8 5 L11 8" stroke="#111" stroke-width="2"/></g>
<g transform="translate(14 565)" shape-rendering="geometricPrecision"><path d="M5 5 V9 H3 V12 M5 9 H12 V12 M5 6 H11 V9" fill="none" stroke="#333" stroke-width="0.8"/><rect x="2.5" y="0.5" width="5" height="5" fill="#a8c8e0" stroke="#333" stroke-width="0.7"/><rect x="6.5" y="7" width="4" height="3" fill="#f0d020"/><rect x="0.5" y="10.5" width="5" height="5" fill="#a8c8e0" stroke="#333" stroke-width="0.7"/><rect x="9.5" y="10.5" width="5" height="5" fill="#a8c8e0" stroke="#333" stroke-width="0.7"/></g>
<rect x="38" y="135" width="968" height="1" fill="#000" />
<rect x="54" y="139" width="1" height="466" fill="#000" />
<rect x="37" y="136" width="1" height="471" fill="#1d4654" />
<polygon points="50,137 54.5,137 50,141.5" fill="#000"/>
<g transform="translate(43.5 123.5) scale(0.9)" shape-rendering="geometricPrecision"><path d="M1.5 4 V2.5 A2.5 2.5 0 0 1 6.5 2.5 V4" fill="none" stroke="#e0d0a0" stroke-width="1.2"/><rect x="0" y="4" width="8" height="5" fill="#f0b020" stroke="#6a4a10" stroke-width="0.7"/><rect x="3.5" y="5.5" width="1" height="2" fill="#332"/></g>
<polygon points="56,130 62,130 59,135" fill="#000"/>
<rect x="58" y="130" width="1" height="5" fill="#000" />
<rect x="68" y="132" width="1" height="3" fill="#000" />
<rect x="78" y="130" width="1" height="5" fill="#000" />
<rect x="88" y="132" width="1" height="3" fill="#000" />
<rect x="98" y="123" width="1" height="12" fill="#000" />
<rect x="108" y="132" width="1" height="3" fill="#000" />
<rect x="118" y="130" width="1" height="5" fill="#000" />
<rect x="128" y="132" width="1" height="3" fill="#000" />
<rect x="138" y="130" width="1" height="5" fill="#000" />
<rect x="148" y="132" width="1" height="3" fill="#000" />
<rect x="158" y="130" width="1" height="5" fill="#000" />
<rect x="168" y="132" width="1" height="3" fill="#000" />
<rect x="178" y="130" width="1" height="5" fill="#000" />
<rect x="188" y="132" width="1" height="3" fill="#000" />
<rect x="198" y="123" width="1" height="12" fill="#000" />
<rect x="208" y="132" width="1" height="3" fill="#000" />
<rect x="218" y="130" width="1" height="5" fill="#000" />
<rect x="228" y="132" width="1" height="3" fill="#000" />
<rect x="238" y="130" width="1" height="5" fill="#000" />
<rect x="248" y="132" width="1" height="3" fill="#000" />
<rect x="258" y="130" width="1" height="5" fill="#000" />
<rect x="268" y="132" width="1" height="3" fill="#000" />
<rect x="278" y="130" width="1" height="5" fill="#000" />
<rect x="288" y="132" width="1" height="3" fill="#000" />
<rect x="298" y="123" width="1" height="12" fill="#000" />
<rect x="308" y="132" width="1" height="3" fill="#000" />
<rect x="318" y="130" width="1" height="5" fill="#000" />
<rect x="328" y="132" width="1" height="3" fill="#000" />
<rect x="338" y="130" width="1" height="5" fill="#000" />
<rect x="348" y="132" width="1" height="3" fill="#000" />
<rect x="358" y="130" width="1" height="5" fill="#000" />
<rect x="368" y="132" width="1" height="3" fill="#000" />
<rect x="378" y="130" width="1" height="5" fill="#000" />
<rect x="388" y="132" width="1" height="3" fill="#000" />
<rect x="398" y="123" width="1" height="12" fill="#000" />
<rect x="408" y="132" width="1" height="3" fill="#000" />
<rect x="418" y="130" width="1" height="5" fill="#000" />
<rect x="428" y="132" width="1" height="3" fill="#000" />
<rect x="438" y="130" width="1" height="5" fill="#000" />
<rect x="448" y="132" width="1" height="3" fill="#000" />
<rect x="458" y="130" width="1" height="5" fill="#000" />
<rect x="468" y="132" width="1" height="3" fill="#000" />
<rect x="478" y="130" width="1" height="5" fill="#000" />
<rect x="488" y="132" width="1" height="3" fill="#000" />
<rect x="498" y="123" width="1" height="12" fill="#000" />
<rect x="508" y="132" width="1" height="3" fill="#000" />
<rect x="518" y="130" width="1" height="5" fill="#000" />
<rect x="528" y="132" width="1" height="3" fill="#000" />
<rect x="538" y="130" width="1" height="5" fill="#000" />
<rect x="548" y="132" width="1" height="3" fill="#000" />
<rect x="558" y="130" width="1" height="5" fill="#000" />
<rect x="568" y="132" width="1" height="3" fill="#000" />
<rect x="578" y="130" width="1" height="5" fill="#000" />
<rect x="588" y="132" width="1" height="3" fill="#000" />
<rect x="598" y="123" width="1" height="12" fill="#000" />
<rect x="608" y="132" width="1" height="3" fill="#000" />
<rect x="618" y="130" width="1" height="5" fill="#000" />
<rect x="628" y="132" width="1" height="3" fill="#000" />
<rect x="638" y="130" width="1" height="5" fill="#000" />
<rect x="648" y="132" width="1" height="3" fill="#000" />
<rect x="658" y="130" width="1" height="5" fill="#000" />
<rect x="668" y="132" width="1" height="3" fill="#000" />
<rect x="678" y="130" width="1" height="5" fill="#000" />
<rect x="688" y="132" width="1" height="3" fill="#000" />
<rect x="698" y="123" width="1" height="12" fill="#000" />
<rect x="708" y="132" width="1" height="3" fill="#000" />
<rect x="718" y="130" width="1" height="5" fill="#000" />
<rect x="728" y="132" width="1" height="3" fill="#000" />
<rect x="738" y="130" width="1" height="5" fill="#000" />
<rect x="748" y="132" width="1" height="3" fill="#000" />
<rect x="758" y="130" width="1" height="5" fill="#000" />
<rect x="768" y="132" width="1" height="3" fill="#000" />
<rect x="778" y="130" width="1" height="5" fill="#000" />
<rect x="788" y="132" width="1" height="3" fill="#000" />
<rect x="798" y="123" width="1" height="12" fill="#000" />
<rect x="808" y="132" width="1" height="3" fill="#000" />
<rect x="818" y="130" width="1" height="5" fill="#000" />
<rect x="828" y="132" width="1" height="3" fill="#000" />
<rect x="838" y="130" width="1" height="5" fill="#000" />
<rect x="848" y="132" width="1" height="3" fill="#000" />
<rect x="858" y="130" width="1" height="5" fill="#000" />
<rect x="868" y="132" width="1" height="3" fill="#000" />
<rect x="878" y="130" width="1" height="5" fill="#000" />
<rect x="888" y="132" width="1" height="3" fill="#000" />
<rect x="898" y="123" width="1" height="12" fill="#000" />
<rect x="908" y="132" width="1" height="3" fill="#000" />
<rect x="918" y="130" width="1" height="5" fill="#000" />
<rect x="928" y="132" width="1" height="3" fill="#000" />
<rect x="938" y="130" width="1" height="5" fill="#000" />
<rect x="948" y="132" width="1" height="3" fill="#000" />
<rect x="958" y="130" width="1" height="5" fill="#000" />
<rect x="968" y="132" width="1" height="3" fill="#000" />
<rect x="978" y="130" width="1" height="5" fill="#000" />
<rect x="988" y="132" width="1" height="3" fill="#000" />
<rect x="998" y="123" width="1" height="12" fill="#000" />
<text x="100" y="131" font-family="Liberation Sans" font-size="9" font-weight="normal" fill="#00050f" text-anchor="start" clip-path="url(#rulclip)" stroke="#00050f" stroke-width="0.25">-100</text>
<text x="200" y="131" font-family="Liberation Sans" font-size="9" font-weight="normal" fill="#00050f" text-anchor="start" clip-path="url(#rulclip)" stroke="#00050f" stroke-width="0.25">0</text>
<text x="300" y="131" font-family="Liberation Sans" font-size="9" font-weight="normal" fill="#00050f" text-anchor="start" clip-path="url(#rulclip)" stroke="#00050f" stroke-width="0.25">100</text>
<text x="400" y="131" font-family="Liberation Sans" font-size="9" font-weight="normal" fill="#00050f" text-anchor="start" clip-path="url(#rulclip)" stroke="#00050f" stroke-width="0.25">200</text>
<text x="500" y="131" font-family="Liberation Sans" font-size="9" font-weight="normal" fill="#00050f" text-anchor="start" clip-path="url(#rulclip)" stroke="#00050f" stroke-width="0.25">300</text>
<text x="600" y="131" font-family="Liberation Sans" font-size="9" font-weight="normal" fill="#00050f" text-anchor="start" clip-path="url(#rulclip)" stroke="#00050f" stroke-width="0.25">400</text>
<text x="700" y="131" font-family="Liberation Sans" font-size="9" font-weight="normal" fill="#00050f" text-anchor="start" clip-path="url(#rulclip)" stroke="#00050f" stroke-width="0.25">500</text>
<text x="800" y="131" font-family="Liberation Sans" font-size="9" font-weight="normal" fill="#00050f" text-anchor="start" clip-path="url(#rulclip)" stroke="#00050f" stroke-width="0.25">600</text>
<text x="900" y="131" font-family="Liberation Sans" font-size="9" font-weight="normal" fill="#00050f" text-anchor="start" clip-path="url(#rulclip)" stroke="#00050f" stroke-width="0.25">700</text>
<text x="1000" y="131" font-family="Liberation Sans" font-size="9" font-weight="normal" fill="#00050f" text-anchor="start" clip-path="url(#rulclip)" stroke="#00050f" stroke-width="0.25">800</text>
<rect x="42" y="147" width="12" height="1" fill="#000" />
<rect x="51" y="157" width="3" height="1" fill="#000" />
<rect x="49" y="167" width="5" height="1" fill="#000" />
<rect x="51" y="177" width="3" height="1" fill="#000" />
<rect x="49" y="187" width="5" height="1" fill="#000" />
<rect x="51" y="197" width="3" height="1" fill="#000" />
<rect x="49" y="207" width="5" height="1" fill="#000" />
<rect x="51" y="217" width="3" height="1" fill="#000" />
<rect x="49" y="227" width="5" height="1" fill="#000" />
<rect x="51" y="237" width="3" height="1" fill="#000" />
<rect x="42" y="247" width="12" height="1" fill="#000" />
<rect x="51" y="257" width="3" height="1" fill="#000" />
<rect x="49" y="267" width="5" height="1" fill="#000" />
<rect x="51" y="277" width="3" height="1" fill="#000" />
<rect x="49" y="287" width="5" height="1" fill="#000" />
<rect x="51" y="297" width="3" height="1" fill="#000" />
<rect x="49" y="307" width="5" height="1" fill="#000" />
<rect x="51" y="317" width="3" height="1" fill="#000" />
<rect x="49" y="327" width="5" height="1" fill="#000" />
<rect x="51" y="337" width="3" height="1" fill="#000" />
<rect x="42" y="347" width="12" height="1" fill="#000" />
<rect x="51" y="357" width="3" height="1" fill="#000" />
<rect x="49" y="367" width="5" height="1" fill="#000" />
<rect x="51" y="377" width="3" height="1" fill="#000" />
<rect x="49" y="387" width="5" height="1" fill="#000" />
<rect x="51" y="397" width="3" height="1" fill="#000" />
<rect x="49" y="407" width="5" height="1" fill="#000" />
<rect x="51" y="417" width="3" height="1" fill="#000" />
<rect x="49" y="427" width="5" height="1" fill="#000" />
<rect x="51" y="437" width="3" height="1" fill="#000" />
<rect x="42" y="447" width="12" height="1" fill="#000" />
<rect x="51" y="457" width="3" height="1" fill="#000" />
<rect x="49" y="467" width="5" height="1" fill="#000" />
<rect x="51" y="477" width="3" height="1" fill="#000" />
<rect x="49" y="487" width="5" height="1" fill="#000" />
<rect x="51" y="497" width="3" height="1" fill="#000" />
<rect x="49" y="507" width="5" height="1" fill="#000" />
<rect x="51" y="517" width="3" height="1" fill="#000" />
<rect x="49" y="527" width="5" height="1" fill="#000" />
<rect x="51" y="537" width="3" height="1" fill="#000" />
<rect x="42" y="547" width="12" height="1" fill="#000" />
<rect x="51" y="557" width="3" height="1" fill="#000" />
<rect x="49" y="567" width="5" height="1" fill="#000" />
<rect x="51" y="577" width="3" height="1" fill="#000" />
<rect x="49" y="587" width="5" height="1" fill="#000" />
<rect x="51" y="597" width="3" height="1" fill="#000" />
<text x="42" y="155" font-family="Liberation Sans" font-size="9" font-weight="normal" fill="#00050f" text-anchor="start" stroke="#00050f" stroke-width="0.25">5</text>
<text x="42" y="164" font-family="Liberation Sans" font-size="9" font-weight="normal" fill="#00050f" text-anchor="start" stroke="#00050f" stroke-width="0.25">0</text>
<text x="42" y="173" font-family="Liberation Sans" font-size="9" font-weight="normal" fill="#00050f" text-anchor="start" stroke="#00050f" stroke-width="0.25">0</text>
<text x="42" y="255" font-family="Liberation Sans" font-size="9" font-weight="normal" fill="#00050f" text-anchor="start" stroke="#00050f" stroke-width="0.25">4</text>
<text x="42" y="264" font-family="Liberation Sans" font-size="9" font-weight="normal" fill="#00050f" text-anchor="start" stroke="#00050f" stroke-width="0.25">0</text>
<text x="42" y="273" font-family="Liberation Sans" font-size="9" font-weight="normal" fill="#00050f" text-anchor="start" stroke="#00050f" stroke-width="0.25">0</text>
<text x="42" y="355" font-family="Liberation Sans" font-size="9" font-weight="normal" fill="#00050f" text-anchor="start" stroke="#00050f" stroke-width="0.25">3</text>
<text x="42" y="364" font-family="Liberation Sans" font-size="9" font-weight="normal" fill="#00050f" text-anchor="start" stroke="#00050f" stroke-width="0.25">0</text>
<text x="42" y="373" font-family="Liberation Sans" font-size="9" font-weight="normal" fill="#00050f" text-anchor="start" stroke="#00050f" stroke-width="0.25">0</text>
<text x="42" y="455" font-family="Liberation Sans" font-size="9" font-weight="normal" fill="#00050f" text-anchor="start" stroke="#00050f" stroke-width="0.25">2</text>
<text x="42" y="464" font-family="Liberation Sans" font-size="9" font-weight="normal" fill="#00050f" text-anchor="start" stroke="#00050f" stroke-width="0.25">0</text>
<text x="42" y="473" font-family="Liberation Sans" font-size="9" font-weight="normal" fill="#00050f" text-anchor="start" stroke="#00050f" stroke-width="0.25">0</text>
<text x="42" y="555" font-family="Liberation Sans" font-size="9" font-weight="normal" fill="#00050f" text-anchor="start" stroke="#00050f" stroke-width="0.25">1</text>
<text x="42" y="564" font-family="Liberation Sans" font-size="9" font-weight="normal" fill="#00050f" text-anchor="start" stroke="#00050f" stroke-width="0.25">0</text>
<text x="42" y="573" font-family="Liberation Sans" font-size="9" font-weight="normal" fill="#00050f" text-anchor="start" stroke="#00050f" stroke-width="0.25">0</text>
<g clip-path="url(#cvclip)" shape-rendering="geometricPrecision">
<rect x="56" y="137" width="951" height="470" fill="#fff"/>
<ellipse cx="84" cy="199" rx="54" ry="129" fill="#00ff00" />
<ellipse cx="260.7" cy="298.8" rx="129" ry="55.6" fill="#008080" stroke="#00ff00" stroke-width="9.6" transform="rotate(-34.6 260.7 298.8)"/>
<rect x="150" y="486" width="474.5" height="27" fill="#800000"/>
<rect x="50" y="437" width="105" height="180" fill="#008080"/>
<rect x="194.3" y="426.6" width="105" height="190" fill="#ff00ff"/>
<rect x="414" y="318" width="27" height="300" fill="#800080"/>
<circle cx="600.5" cy="254" r="203" fill="none" stroke="#000" stroke-width="1"/>
<path d="M426 152 L600.3 255" stroke="#000" stroke-width="1" fill="none"/>
<polyline points="636.15,173.48 636.16,173.62 636.15,173.77 636.14,173.92 636.12,174.07 636.09,174.22 636.05,174.37 636.00,174.53 635.94,174.68 635.87,174.83 635.79,174.98 635.70,175.13 635.61,175.28 635.50,175.42 635.38,175.55 635.25,175.69 635.11,175.82 634.96,175.94 634.81,176.05 634.64,176.16 634.47,176.26 634.29,176.35 634.10,176.44 633.91,176.51 633.71,176.57 633.50,176.63 633.28,176.67 633.06,176.70 632.84,176.72 632.61,176.73 632.38,176.73 632.15,176.71 631.92,176.68 631.68,176.64 631.45,176.58 631.21,176.51 630.98,176.43 630.74,176.33 630.51,176.22 630.29,176.10 630.06,175.96 629.85,175.81 629.64,175.65 629.43,175.47 629.23,175.28 629.04,175.08 628.86,174.87 628.69,174.64 628.53,174.41 628.38,174.16 628.24,173.90 628.12,173.64 628.01,173.36 627.91,173.08 627.82,172.78 627.75,172.48 627.70,172.18 627.66,171.87 627.63,171.55 627.63,171.23 627.64,170.91 627.66,170.58 627.71,170.26 627.77,169.93 627.85,169.61 627.94,169.28 628.06,168.96 628.19,168.64 628.34,168.33 628.50,168.02 628.69,167.71 628.89,167.42 629.11,167.13 629.34,166.85 629.59,166.59 629.86,166.33 630.14,166.09 630.44,165.85 630.75,165.64 631.07,165.43 631.41,165.24 631.76,165.07 632.12,164.92 632.49,164.78 632.87,164.66 633.26,164.56 633.65,164.48 634.06,164.42 634.47,164.38 634.88,164.36 635.30,164.36 635.72,164.38 636.14,164.43 636.56,164.49 636.98,164.58 637.40,164.69 637.81,164.83 638.22,164.98 638.63,165.16 639.03,165.36 639.42,165.58 639.80,165.82 640.17,166.08 640.53,166.37 640.88,166.67 641.21,166.99 641.53,167.34 641.83,167.70 642.12,168.07 642.39,168.47 642.64,168.88 642.87,169.30 643.08,169.74 643.26,170.19 643.43,170.66 643.57,171.13 643.69,171.62 643.79,172.11 643.86,172.61 643.90,173.12 643.92,173.63 643.92,174.14 643.88,174.66 643.83,175.18 643.74,175.69 643.63,176.21 643.49,176.72 643.32,177.23 643.13,177.73 642.91,178.22 642.66,178.71 642.39,179.18 642.10,179.65 641.78,180.09 641.43,180.53 641.06,180.95 640.67,181.35 640.25,181.74 639.82,182.10 639.36,182.45 638.89,182.77 638.39,183.07 637.88,183.34 637.35,183.60 636.81,183.82 636.25,184.02 635.68,184.19 635.11,184.33 634.52,184.45 633.92,184.53 633.31,184.59 632.71,184.61 632.09,184.60 631.48,184.57 630.86,184.50 630.25,184.40 629.64,184.26 629.03,184.10 628.43,183.90 627.84,183.68 627.25,183.42 626.68,183.13 626.12,182.81 625.57,182.47 625.04,182.09 624.53,181.68 624.03,181.25 623.56,180.79 623.11,180.31 622.68,179.80 622.27,179.27 621.89,178.71 621.54,178.13 621.21,177.54 620.91,176.92 620.65,176.29 620.41,175.64 620.21,174.98 620.04,174.31 619.90,173.62 619.80,172.93 619.73,172.23 619.70,171.52 619.70,170.81 619.74,170.10 619.82,169.38 619.93,168.67 620.08,167.96 620.26,167.26 620.48,166.56 620.74,165.88 621.03,165.20 621.36,164.54 621.72,163.89 622.12,163.26 622.55,162.64 623.01,162.05 623.50,161.48 624.02,160.93 624.57,160.40 625.15,159.90 625.76,159.43 626.39,158.99 627.05,158.58 627.73,158.20 628.43,157.86 629.15,157.55 629.89,157.27 630.64,157.03 631.41,156.83 632.19,156.67 632.98,156.54 633.78,156.46 634.58,156.41 635.39,156.41 636.20,156.44 637.01,156.52 637.82,156.64 638.63,156.80 639.43,157.00 640.22,157.25 641.01,157.53 641.78,157.85 642.53,158.21 643.27,158.61 643.99,159.05 644.69,159.53 645.37,160.05 646.02,160.60 646.65,161.18 647.25,161.80 647.82,162.44 648.36,163.12 648.86,163.83 649.33,164.57 649.77,165.33 650.17,166.11 650.53,166.92 650.85,167.74 651.12,168.58 651.36,169.44 651.56,170.32 651.71,171.20 651.81,172.10 651.87,173.00 651.89,173.91 651.86,174.82 651.78,175.73 651.66,176.64 651.49,177.54 651.28,178.44 651.02,179.33 650.71,180.21 650.36,181.08 649.97,181.93 649.53,182.76 649.05,183.57 648.53,184.36 647.97,185.12 647.36,185.86 646.72,186.56 646.04,187.24 645.33,187.89 644.58,188.50 643.80,189.07 642.99,189.60 642.15,190.10 641.29,190.55 640.40,190.97 639.48,191.33 638.55,191.66 637.60,191.93 636.63,192.16 635.65,192.34 634.66,192.47 633.66,192.55 632.66,192.58 631.65,192.57 630.64,192.50 629.63,192.37 628.62,192.20 627.63,191.98 626.64,191.71 625.66,191.38 624.70,191.01 623.75,190.59 622.83,190.12 621.93,189.60 621.05,189.03 620.20,188.43 619.37,187.77 618.58,187.08 617.82,186.34 617.10,185.56 616.42,184.75 615.77,183.90 615.17,183.01 614.61,182.10 614.10,181.15 613.63,180.18 613.21,179.18 612.84,178.16 612.52,177.12 612.26,176.06 612.04,174.99 611.88,173.90 611.78,172.81 611.72,171.70 611.73,170.59 611.79,169.48 611.90,168.38 612.07,167.27 612.30,166.17 612.59,165.09 612.92,164.01 613.32,162.95 613.76,161.91 614.26,160.89 614.81,159.89 615.42,158.92 616.07,157.98 616.77,157.07 617.52,156.19 618.31,155.35 619.15,154.55 620.02,153.79 620.94,153.07 621.90,152.40 622.89,151.77 623.91,151.19 624.96,150.67 626.04,150.19 627.15,149.77 628.28,149.40 629.43,149.10 630.60,148.84 631.78,148.65 632.97,148.51 634.17,148.44 635.38,148.42 636.58,148.47 637.79,148.58 639.00,148.74 640.19,148.97 641.38,149.26 642.56,149.61 643.72,150.02 644.86,150.48 645.97,151.01 647.07,151.59 648.13,152.23 649.17,152.92 650.17,153.66 651.13,154.46 652.06,155.30 652.94,156.20 653.79,157.13 654.58,158.12 655.33,159.14 656.02,160.20 656.67,161.30 657.26,162.43 657.79,163.59 658.27,164.78 658.68,166.00 659.04,167.24 659.34,168.50 659.57,169.77 659.73,171.06 659.84,172.36 659.88,173.66 659.85,174.97 659.76,176.28 659.60,177.58 659.37,178.88 659.08,180.17 658.73,181.45 658.31,182.70 657.82,183.94 657.28,185.16 656.67,186.35 656.00,187.51 655.28,188.64 654.49,189.74 653.65,190.79 652.76,191.81 651.81,192.78 650.81,193.70 649.77,194.58 648.68,195.40 647.55,196.17 646.38,196.89 645.17,197.54 643.93,198.14 642.65,198.67 641.35,199.14 640.03,199.55 638.68,199.89 637.31,200.16 635.93,200.37 634.53,200.50 633.13,200.57 631.73,200.56 630.32,200.49 628.91,200.34 627.51,200.12 626.12,199.84 624.75,199.48 623.39,199.05 622.05,198.56 620.73,197.99 619.44,197.36 618.18,196.67 616.96,195.91 615.77,195.09 614.62,194.20 613.51,193.26 612.45,192.27 611.44,191.22 610.49,190.12 609.58,188.96 608.73,187.77 607.95,186.52 607.22,185.24 606.56,183.92 605.96,182.57 605.43,181.18 604.97,179.77 604.58,178.33 604.26,176.87 604.02,175.40 603.85,173.91 603.75,172.41 603.73,170.91 603.78,169.40 603.91,167.89 604.12,166.39 604.40,164.90 604.76,163.42 605.19,161.96 605.69,160.52 606.27,159.10 606.92,157.71 607.63,156.35 608.42,155.03 609.28,153.74 610.20,152.50 611.18,151.30 612.22,150.15 613.32,149.05 614.48,148.01 615.69,147.02 616.95,146.09 618.26,145.23 619.62,144.43 621.01,143.70 622.45,143.04 623.91,142.44 625.41,141.93 626.93,141.48 628.48,141.12 630.05,140.83 631.63,140.62 633.23,140.48 634.83,140.43 636.44,140.46 638.05,140.57 639.65,140.76 641.24,141.03 642.82,141.38 644.39,141.81 645.93,142.32 647.45,142.90 648.94,143.56 650.40,144.30 651.83,145.11 653.21,146.00 654.55,146.95 655.84,147.97 657.09,149.06 658.28,150.21 659.41,151.42 660.48,152.69 661.49,154.01 662.44,155.39 663.31,156.81 664.12,158.28 664.85,159.79 665.50,161.33 666.08,162.91 666.58,164.52 667.00,166.16 667.34,167.82 667.60,169.50 667.77,171.19 667.86,172.89 667.86,174.59 667.77,176.30 667.61,178.00 667.35,179.70 667.01,181.38 666.59,183.05 666.08,184.70 665.48,186.32 664.81,187.92 664.06,189.48 663.22,191.00 662.32,192.49 661.33,193.93 660.27,195.32 659.15,196.66 657.95,197.94 656.69,199.16 655.37,200.32 653.99,201.42 652.55,202.45 651.06,203.40 649.52,204.28 647.94,205.09 646.32,205.81 644.66,206.46 642.96,207.02 641.24,207.50 639.49,207.89 637.72,208.19 635.94,208.41 634.14,208.53 632.34,208.57 630.53,208.51 628.72,208.37 626.93,208.13 625.14,207.80 623.37,207.39 621.62,206.88 619.89,206.29 618.19,205.61 616.52,204.84 614.90,204.00 613.31,203.06 611.77,202.05 610.28,200.96 608.84,199.80 607.47,198.56 606.15,197.26 604.90,195.88 603.71,194.45 602.60,192.95 601.56,191.40 600.60,189.79 599.72,188.14 598.92,186.44 598.21,184.70 597.58,182.92 597.04,181.11 596.60,179.28 596.24,177.42 595.98,175.54 595.81,173.65 595.74,171.75 595.76,169.84 595.88,167.94 596.09,166.04 596.40,164.14 596.80,162.27 597.30,160.41 597.89,158.58 598.57,156.78 599.34,155.01 600.21,153.27 601.15,151.59 602.19,149.94 603.31,148.35 604.50,146.82 605.78,145.34 607.13,143.93 608.55,142.58 610.04,141.31 611.59,140.10 613.20,138.98 614.87,137.94 616.60,136.98 618.37,136.10 620.18,135.32 622.04,134.62 623.93,134.02 625.86,133.51 627.80,133.10 629.77,132.79 631.76,132.57 633.76,132.46 635.76,132.44 637.77,132.53 639.77,132.71 641.77,133.00 643.75,133.38 645.71,133.87 647.64,134.45 649.55,135.13 651.43,135.91 653.27,136.78 655.06,137.74 656.81,138.80 658.50,139.94 660.14,141.16 661.72,142.47 663.23,143.86 664.67,145.33 666.04,146.86 667.33,148.47 668.54,150.14 669.67,151.87 670.72,153.66 671.67,155.51 672.53,157.40 673.30,159.33 673.97,161.30 674.54,163.31 675.01,165.35 675.38,167.41 675.65,169.49 675.81,171.58 675.86,173.69 675.82,175.79 675.66,177.90 675.40,179.99 675.04,182.08 674.57,184.14 674.00,186.19 673.32,188.20 672.54,190.18 671.67,192.13 670.70,194.03 669.63,195.88 668.47,197.68 667.21,199.42 665.87,201.10 664.45,202.71 662.94,204.25 661.36,205.72 659.71,207.10 657.98,208.41 656.19,209.63 654.33,210.76 652.42,211.79 650.46,212.73 648.45,213.57 646.40,214.32 644.31,214.95 642.18,215.49 640.03,215.92 637.86,216.24 635.67,216.45 633.47,216.55 631.27,216.55 629.06,216.43 626.87,216.20 624.68,215.86 622.50,215.41 620.35,214.85 618.23,214.19 616.14,213.42 614.09,212.54 612.08,211.56 610.13,210.48 608.22,209.30 606.37,208.03 604.59,206.66 602.88,205.21 601.24,203.66 599.67,202.04 598.19,200.33 596.79,198.56 595.48,196.71 594.26,194.79 593.14,192.82 592.12,190.79 591.19,188.70 590.38,186.57 589.67,184.40 589.07,182.19 588.57,179.96 588.19,177.69 587.93,175.41 587.78,173.12 587.74,170.81 587.82,168.51 588.01,166.21 588.32,163.91 588.75,161.64 589.28,159.38 589.93,157.15 590.70,154.95 591.57,152.79 592.55,150.68 593.64,148.61 594.83,146.60 596.12,144.65 597.51,142.76 599.00,140.94 600.57,139.19 602.24,137.53 603.98,135.94 605.81,134.45 607.71,133.04 609.68,131.73 611.72,130.52 613.82,129.42 615.98,128.41 618.18,127.52 620.43,126.73 622.72,126.06 625.04,125.50 627.39,125.06 629.77,124.73 632.16,124.53 634.56,124.44 636.96,124.48 639.37,124.63 641.76,124.91 644.15,125.30 646.51,125.82 648.85,126.45 651.15,127.20 653.42,128.06 655.64,129.04 657.82,130.13 659.94,131.33 662.00,132.64 664.00,134.05 665.93,135.56 667.78,137.17 669.55,138.86 671.23,140.65 672.83,142.52 674.33,144.47 675.73,146.50 677.04,148.60 678.23,150.76 679.32,152.98 680.30,155.26 681.16,157.59 681.91,159.96 682.54,162.37 683.05,164.80 683.44,167.27 683.70,169.75 683.84,172.25 683.85,174.75 683.74,177.26 683.50,179.76 683.14,182.25 682.65,184.71 682.04,187.16 681.31,189.57 680.46,191.95 679.48,194.29 678.39,196.57 677.19,198.80 675.87,200.98 674.45,203.08 672.92,205.11 671.28,207.07 669.55,208.95 667.73,210.74 665.82,212.43 663.82,214.04 661.74,215.54" fill="none" stroke="#000" stroke-width="1.05"/>
<polygon points="863.6,130 853.2,144.2 899.9,130 909.0,130 917.4,189.6 936.6,137.3 988.9,157.4 968,130" fill="#000080"/>
<polygon points="945.8,191.8 965.7,270.5 1017,337.7 934,316.3 851.8,322.2 910.5,265.8" fill="#ff00ff"/>
<polygon points="943.4,220 957.5,274 988.5,321 935.2,306.9 878.8,309.7 918.7,269.3" fill="#000080"/>
<polygon points="937.10,354.96 936.67,401.59 956.74,359.49 944.25,404.43 974.53,368.95 950.84,409.13 989.27,382.69 955.99,415.37 999.95,399.79 959.35,422.74 1005.84,419.06 960.68,430.72 1006.54,439.20 959.91,438.77 1002.01,458.84 957.07,446.35 992.55,476.63 952.37,452.94 978.81,491.37 946.13,458.09 961.71,502.05 938.76,461.45 942.44,507.94 930.78,462.78 922.30,508.64 922.73,462.01 902.66,504.11 915.15,459.17 884.87,494.65 908.56,454.47 870.13,480.91 903.41,448.23 859.45,463.81 900.05,440.86 853.56,444.54 898.72,432.88 852.86,424.40 899.49,424.83 857.39,404.76 902.33,417.25 866.85,386.97 907.03,410.66 880.59,372.23 913.27,405.51 897.69,361.55 920.64,402.15 916.96,355.66 928.62,400.82" fill="#800080"/>
<polygon points="804.3,416.2 812.8,471.8 867.6,462.4 824.7,497.3 860.4,539.7 807.8,519.2 789.3,571.6 781.1,516.7 725.5,526 769.4,491.8 733.7,448.6 786.1,468.6" fill="#ff0000"/>
<path d="M56 318.5 H624.5 V607" fill="none" stroke="#3a3a3a" stroke-width="1" stroke-dasharray="4 4" stroke-dashoffset="-6" shape-rendering="crispEdges"/>
<path d="M332.5 305 L337 309.5 L334.5 309.5 L334.5 313 L337 313 L332.5 317.5 L328 313 L330.5 313 L330.5 309.5 L328 309.5 Z" fill="#ff00ff"/>
<path d="M332 318 L336.5 313" stroke="#000" stroke-width="1.2"/>
<path d="M626.5 315.5 L634.5 307.5" stroke="#000" stroke-width="3"/>
<polygon points="629,306 636,306 636,313" fill="#000"/>
<polygon points="625,310 625,317 632,317" fill="#000"/>
</g>
<rect x="1007" y="136" width="28" height="471" fill="url(#hatch)" />
<rect x="1007" y="136" width="28" height="27" fill="#23839d" />
<rect x="1007" y="136" width="28" height="1" fill="#7dd0e3" />
<rect x="1007" y="136" width="1" height="27" fill="#7dd0e3" />
<rect x="1007" y="161" width="28" height="2" fill="#3c4246" />
<rect x="1033" y="136" width="2" height="27" fill="#3c4246" />
<polygon points="1013,152 1028,152 1020.5,144" fill="#000"/>
<rect x="1007" y="580" width="28" height="27" fill="#23839d" />
<rect x="1007" y="580" width="28" height="1" fill="#7dd0e3" />
<rect x="1007" y="580" width="1" height="27" fill="#7dd0e3" />
<rect x="1007" y="605" width="28" height="2" fill="#3c4246" />
<rect x="1033" y="580" width="2" height="27" fill="#3c4246" />
<polygon points="1013,589 1028,589 1020.5,596" fill="#000"/>
<rect x="1007" y="341" width="28" height="86" fill="#23839d" />
<rect x="1007" y="341" width="28" height="1" fill="#1cb4e4" />
<rect x="1007" y="341" width="1" height="86" fill="#1cb4e4" />
<rect x="1007" y="426" width="28" height="1" fill="#000" />
<rect x="1034" y="341" width="1" height="86" fill="#000" />
<rect x="56" y="607" width="951" height="28" fill="url(#hatch)" />
<rect x="57" y="607" width="27" height="28" fill="#23839d" />
<rect x="57" y="607" width="27" height="1" fill="#7dd0e3" />
<rect x="57" y="607" width="1" height="28" fill="#7dd0e3" />
<rect x="57" y="633" width="27" height="2" fill="#3c4246" />
<rect x="82" y="607" width="2" height="28" fill="#3c4246" />
<polygon points="73.5,613 73.5,628 66,620.5" fill="#000"/>
<rect x="980" y="607" width="27" height="28" fill="#23839d" />
<rect x="980" y="607" width="27" height="1" fill="#7dd0e3" />
<rect x="980" y="607" width="1" height="28" fill="#7dd0e3" />
<rect x="980" y="633" width="27" height="2" fill="#3c4246" />
<rect x="1005" y="607" width="2" height="28" fill="#3c4246" />
<polygon points="990,613 990,628 998,620.5" fill="#000"/>
<rect x="347" y="607" width="272" height="28" fill="#23839d" />
<rect x="347" y="607" width="272" height="1" fill="#1cb4e4" />
<rect x="347" y="607" width="1" height="28" fill="#1cb4e4" />
<rect x="347" y="634" width="272" height="1" fill="#000" />
<rect x="618" y="607" width="1" height="28" fill="#000" />
<g transform="translate(1020 620)"><polygon points="-3,-5 4,0 -3,5" fill="#c0a0d0"/><polygon points="-3,-5 0,-2 -3,0" fill="#30a030"/></g>
<g transform="translate(1020 127)"><circle cx="0" cy="0" r="4" fill="#e8e8e8" stroke="#555" stroke-width="1" shape-rendering="geometricPrecision"/><path d="M3 3 L6 6" stroke="#333" stroke-width="1.5"/></g>
<rect x="1041" y="121" width="1" height="513" fill="#000" />
<rect x="1041" y="121" width="255" height="1" fill="#000" />
<rect x="1042" y="146" width="250" height="1" fill="#1d4654" />
<text x="1056" y="140" font-family="Liberation Sans" font-size="14" font-weight="normal" fill="#04080e" text-anchor="start" textLength="49" lengthAdjust="spacingAndGlyphs" >Objects</text>
<g transform="translate(1042 128) scale(0.78)" shape-rendering="geometricPrecision"><path d="M0.5 9 L3.5 7 H11.5 L15.5 11 L12.5 13 H4 Z" fill="#f8f8f8" stroke="#444" stroke-width="1"/><path d="M0.5 6 L3.5 4 H11.5 L15.5 8 L12.5 10 H4 Z" fill="#f8f8f8" stroke="#444" stroke-width="1"/><path d="M0.5 3 L3.5 1 H11.5 L15.5 5 L12.5 7 H4 Z" fill="#f8f8f8" stroke="#444" stroke-width="1"/></g>
<g shape-rendering="geometricPrecision"><rect x="1250.5" y="127.5" width="10" height="10" rx="1.5" fill="none" stroke="#1a4a58" stroke-width="1"/><polygon points="1253,132.5 1258,129.5 1258,135.5" fill="#1a4a58"/><rect x="1274.5" y="127.5" width="10" height="10" rx="1.5" fill="none" stroke="#1a4a58" stroke-width="1"/><path d="M1276.8 129.8 L1282.2 135.2 M1282.2 129.8 L1276.8 135.2" stroke="#1a4a58" stroke-width="1.8"/></g>
<rect x="1048" y="152" width="239" height="308" fill="#1cb4e4" />
<rect x="1048" y="152" width="238" height="1" fill="#000" />
<rect x="1048" y="152" width="1" height="307" fill="#000" />
<rect x="1049" y="153" width="237" height="306" fill="#f0fafc" />
<rect x="1049" y="173" width="236" height="284" fill="#d7eef6" />
<rect x="1049" y="153" width="17" height="20" fill="#23839d" />
<rect x="1049" y="153" width="17" height="1" fill="#7dd0e3" />
<rect x="1049" y="153" width="1" height="20" fill="#7dd0e3" />
<rect x="1049" y="172" width="17" height="1" fill="#3c4246" />
<rect x="1065" y="153" width="1" height="20" fill="#3c4246" />
<rect x="1066" y="153" width="17" height="20" fill="#23839d" />
<rect x="1066" y="153" width="17" height="1" fill="#7dd0e3" />
<rect x="1066" y="153" width="1" height="20" fill="#7dd0e3" />
<rect x="1066" y="172" width="17" height="1" fill="#3c4246" />
<rect x="1082" y="153" width="1" height="20" fill="#3c4246" />
<rect x="1083" y="153" width="17" height="20" fill="#23839d" />
<rect x="1083" y="153" width="17" height="1" fill="#7dd0e3" />
<rect x="1083" y="153" width="1" height="20" fill="#7dd0e3" />
<rect x="1083" y="172" width="17" height="1" fill="#3c4246" />
<rect x="1099" y="153" width="1" height="20" fill="#3c4246" />
<rect x="1100" y="153" width="23" height="20" fill="#23839d" />
<rect x="1100" y="153" width="23" height="1" fill="#7dd0e3" />
<rect x="1100" y="153" width="1" height="20" fill="#7dd0e3" />
<rect x="1100" y="172" width="23" height="1" fill="#3c4246" />
<rect x="1122" y="153" width="1" height="20" fill="#3c4246" />
<rect x="1123" y="153" width="19" height="20" fill="#23839d" />
<rect x="1123" y="153" width="19" height="1" fill="#7dd0e3" />
<rect x="1123" y="153" width="1" height="20" fill="#7dd0e3" />
<rect x="1123" y="172" width="19" height="1" fill="#3c4246" />
<rect x="1141" y="153" width="1" height="20" fill="#3c4246" />
<rect x="1142" y="153" width="144" height="20" fill="#23839d" />
<rect x="1142" y="153" width="144" height="1" fill="#7dd0e3" />
<rect x="1142" y="153" width="1" height="20" fill="#7dd0e3" />
<rect x="1142" y="172" width="144" height="1" fill="#3c4246" />
<rect x="1285" y="153" width="1" height="20" fill="#3c4246" />
<text x="1050" y="168.5" font-family="Liberation Sans" font-size="14" font-weight="normal" fill="#04080e" text-anchor="start" textLength="9" lengthAdjust="spacingAndGlyphs" >V</text>
<text x="1067" y="168.5" font-family="Liberation Sans" font-size="14" font-weight="normal" fill="#04080e" text-anchor="start" textLength="7" lengthAdjust="spacingAndGlyphs" >L</text>
<text x="1084" y="168.5" font-family="Liberation Sans" font-size="14" font-weight="normal" fill="#04080e" text-anchor="start" textLength="8" lengthAdjust="spacingAndGlyphs" >T</text>
<text x="1101" y="168.5" font-family="Liberation Sans" font-size="14" font-weight="normal" fill="#04080e" text-anchor="start" textLength="19" lengthAdjust="spacingAndGlyphs" >CM</text>
<text x="1124" y="168.5" font-family="Liberation Sans" font-size="14" font-weight="normal" fill="#04080e" text-anchor="start" textLength="18" lengthAdjust="spacingAndGlyphs" >HL</text>
<text x="1143" y="168.5" font-family="Liberation Sans" font-size="14" font-weight="normal" fill="#04080e" text-anchor="start" textLength="34" lengthAdjust="spacingAndGlyphs" >Label</text>
<g transform="translate(1057.5 185)" shape-rendering="geometricPrecision"><path d="M-4.8 0.5 Q0 -4 4.8 0.5 Q0 4 -4.8 0.5 Z" fill="#f4f4f4" stroke="#111" stroke-width="1.1"/><circle cx="0" cy="0.6" r="1.8" fill="#000"/><path d="M-3.5 -1.8 L-4.5 -3.2 M-1.5 -2.6 L-2 -4.2 M0.5 -2.8 L0.5 -4.5 M2.2 -2.4 L3 -4 M3.8 -1.6 L4.8 -2.8" stroke="#111" stroke-width="0.9"/></g>
<g transform="translate(1074.5 185)" shape-rendering="geometricPrecision"><path d="M0.5 0 V-2.5 A2.2 2.2 0 0 1 4.5 -2.5 V-1" fill="none" stroke="#444" stroke-width="0.9"/><rect x="-3" y="0" width="6" height="4.5" fill="#f0d868" stroke="#3a3010" stroke-width="0.7"/><rect x="-0.5" y="1.5" width="1.2" height="1.5" fill="#333"/></g>
<g transform="translate(1091 185)" shape-rendering="geometricPrecision"><polygon points="-4.5,-2 2.5,-2 4.5,0 -2.5,0" fill="#f0f0f0" stroke="#555" stroke-width="0.6"/><polygon points="-2.5,0 4.5,0 4.5,2.5 -2.5,2.5" fill="#8a8a8a" stroke="#444" stroke-width="0.6"/><polygon points="-4.5,-2 -2.5,0 -2.5,2.5 -4.5,0.5" fill="#8a8a8a" stroke="#444" stroke-width="0.6"/></g>
<rect x="1127" y="176" width="10" height="20" fill="#000" />
<rect x="1128" y="177" width="8" height="9" fill="#cccccc" />
<rect x="1128" y="177" width="4" height="4" fill="#b0b0b0" />
<rect x="1132" y="181" width="4" height="5" fill="#b0b0b0" />
<rect x="1128" y="186" width="8" height="9" fill="#ff0000" />
<rect x="1145.5" y="182.5" width="9" height="9" fill="#fff" stroke="#4a1848" stroke-width="1"/>
<rect x="1147" y="187" width="6" height="1" fill="#000" />
<rect x="1149.5" y="184.5" width="1" height="6" fill="#000" />
<text x="1162" y="192" font-family="Liberation Sans" font-size="15" font-weight="normal" fill="#04080e" text-anchor="start" textLength="48" lengthAdjust="spacingAndGlyphs" >Layer 4</text>
<g transform="translate(1057.5 211)" shape-rendering="geometricPrecision"><path d="M-4.8 0.5 Q0 -4 4.8 0.5 Q0 4 -4.8 0.5 Z" fill="#f4f4f4" stroke="#111" stroke-width="1.1"/><circle cx="0" cy="0.6" r="1.8" fill="#000"/><path d="M-3.5 -1.8 L-4.5 -3.2 M-1.5 -2.6 L-2 -4.2 M0.5 -2.8 L0.5 -4.5 M2.2 -2.4 L3 -4 M3.8 -1.6 L4.8 -2.8" stroke="#111" stroke-width="0.9"/></g>
<g transform="translate(1074.5 211)" shape-rendering="geometricPrecision"><path d="M0.5 0 V-2.5 A2.2 2.2 0 0 1 4.5 -2.5 V-1" fill="none" stroke="#444" stroke-width="0.9"/><rect x="-3" y="0" width="6" height="4.5" fill="#f0d868" stroke="#3a3010" stroke-width="0.7"/><rect x="-0.5" y="1.5" width="1.2" height="1.5" fill="#333"/></g>
<g transform="translate(1091 211)" shape-rendering="geometricPrecision"><polygon points="-4.5,-2 2.5,-2 4.5,0 -2.5,0" fill="#f0f0f0" stroke="#555" stroke-width="0.6"/><polygon points="-2.5,0 4.5,0 4.5,2.5 -2.5,2.5" fill="#8a8a8a" stroke="#444" stroke-width="0.6"/><polygon points="-4.5,-2 -2.5,0 -2.5,2.5 -4.5,0.5" fill="#8a8a8a" stroke="#444" stroke-width="0.6"/></g>
<rect x="1127" y="202" width="10" height="20" fill="#000" />
<rect x="1128" y="203" width="8" height="9" fill="#cccccc" />
<rect x="1128" y="203" width="4" height="4" fill="#b0b0b0" />
<rect x="1132" y="207" width="4" height="5" fill="#b0b0b0" />
<rect x="1128" y="212" width="8" height="9" fill="#ff0000" />
<rect x="1145.5" y="208.5" width="9" height="9" fill="#fff" stroke="#4a1848" stroke-width="1"/>
<rect x="1147" y="213" width="6" height="1" fill="#000" />
<rect x="1149.5" y="210.5" width="1" height="6" fill="#000" />
<text x="1162" y="218" font-family="Liberation Sans" font-size="15" font-weight="normal" fill="#04080e" text-anchor="start" textLength="48" lengthAdjust="spacingAndGlyphs" >Layer 3</text>
<rect x="1049" y="225" width="237" height="26" fill="#23839d" />
<g transform="translate(1057.5 237)" shape-rendering="geometricPrecision"><path d="M-4.8 0.5 Q0 -4 4.8 0.5 Q0 4 -4.8 0.5 Z" fill="#f4f4f4" stroke="#111" stroke-width="1.1"/><circle cx="0" cy="0.6" r="1.8" fill="#000"/><path d="M-3.5 -1.8 L-4.5 -3.2 M-1.5 -2.6 L-2 -4.2 M0.5 -2.8 L0.5 -4.5 M2.2 -2.4 L3 -4 M3.8 -1.6 L4.8 -2.8" stroke="#111" stroke-width="0.9"/></g>
<g transform="translate(1074.5 237)" shape-rendering="geometricPrecision"><path d="M0.5 0 V-2.5 A2.2 2.2 0 0 1 4.5 -2.5 V-1" fill="none" stroke="#444" stroke-width="0.9"/><rect x="-3" y="0" width="6" height="4.5" fill="#f0d868" stroke="#3a3010" stroke-width="0.7"/><rect x="-0.5" y="1.5" width="1.2" height="1.5" fill="#333"/></g>
<g transform="translate(1091 237)" shape-rendering="geometricPrecision"><polygon points="-4.5,-2 2.5,-2 4.5,0 -2.5,0" fill="#f4c840" stroke="#555" stroke-width="0.6"/><polygon points="-2.5,0 4.5,0 4.5,2.5 -2.5,2.5" fill="#b08010" stroke="#444" stroke-width="0.6"/><polygon points="-4.5,-2 -2.5,0 -2.5,2.5 -4.5,0.5" fill="#b08010" stroke="#444" stroke-width="0.6"/></g>
<rect x="1127" y="228" width="10" height="20" fill="#000" />
<rect x="1128" y="229" width="8" height="9" fill="#cccccc" />
<rect x="1128" y="229" width="4" height="4" fill="#b0b0b0" />
<rect x="1132" y="233" width="4" height="5" fill="#b0b0b0" />
<rect x="1128" y="238" width="8" height="9" fill="#ff0000" />
<rect x="1145.5" y="234.5" width="9" height="9" fill="#fff" stroke="#4a1848" stroke-width="1"/>
<rect x="1147" y="239" width="6" height="1" fill="#000" />
<text x="1162" y="244" font-family="Liberation Sans" font-size="15" font-weight="normal" fill="#04080e" text-anchor="start" textLength="48" lengthAdjust="spacingAndGlyphs" >Layer 2</text>
<g transform="translate(1057.5 263)" shape-rendering="geometricPrecision"><path d="M-4.8 0.5 Q0 -4 4.8 0.5 Q0 4 -4.8 0.5 Z" fill="#f4f4f4" stroke="#111" stroke-width="1.1"/><circle cx="0" cy="0.6" r="1.8" fill="#000"/><path d="M-3.5 -1.8 L-4.5 -3.2 M-1.5 -2.6 L-2 -4.2 M0.5 -2.8 L0.5 -4.5 M2.2 -2.4 L3 -4 M3.8 -1.6 L4.8 -2.8" stroke="#111" stroke-width="0.9"/></g>
<g transform="translate(1074.5 263)" shape-rendering="geometricPrecision"><path d="M0.5 0 V-2.5 A2.2 2.2 0 0 1 4.5 -2.5 V-1" fill="none" stroke="#444" stroke-width="0.9"/><rect x="-3" y="0" width="6" height="4.5" fill="#f0d868" stroke="#3a3010" stroke-width="0.7"/><rect x="-0.5" y="1.5" width="1.2" height="1.5" fill="#333"/></g>
<g transform="translate(1091 263)" shape-rendering="geometricPrecision"><rect x="-1.5" y="-4.5" width="2.5" height="6" fill="#e08050" stroke="#7a3010" stroke-width="0.6"/><polygon points="-4,1.5 3,1.5 5,4.5 -2,4.5" fill="#e8e8e8" stroke="#555" stroke-width="0.6"/></g>
<rect x="1127" y="254" width="10" height="20" fill="#000" />
<rect x="1128" y="255" width="8" height="9" fill="#cccccc" />
<rect x="1128" y="255" width="4" height="4" fill="#b0b0b0" />
<rect x="1132" y="259" width="4" height="5" fill="#b0b0b0" />
<rect x="1128" y="264" width="8" height="9" fill="#ff0000" />
<text x="1178" y="270" font-family="Liberation Sans" font-size="15" font-weight="normal" fill="#04080e" text-anchor="start" textLength="57" lengthAdjust="spacingAndGlyphs" >rect1242</text>
<g transform="translate(1057.5 289)" shape-rendering="geometricPrecision"><path d="M-4.8 0.5 Q0 -4 4.8 0.5 Q0 4 -4.8 0.5 Z" fill="#f4f4f4" stroke="#111" stroke-width="1.1"/><circle cx="0" cy="0.6" r="1.8" fill="#000"/><path d="M-3.5 -1.8 L-4.5 -3.2 M-1.5 -2.6 L-2 -4.2 M0.5 -2.8 L0.5 -4.5 M2.2 -2.4 L3 -4 M3.8 -1.6 L4.8 -2.8" stroke="#111" stroke-width="0.9"/></g>
<g transform="translate(1074.5 289)" shape-rendering="geometricPrecision"><path d="M0.5 0 V-2.5 A2.2 2.2 0 0 1 4.5 -2.5 V-1" fill="none" stroke="#444" stroke-width="0.9"/><rect x="-3" y="0" width="6" height="4.5" fill="#f0d868" stroke="#3a3010" stroke-width="0.7"/><rect x="-0.5" y="1.5" width="1.2" height="1.5" fill="#333"/></g>
<g transform="translate(1091 289)" shape-rendering="geometricPrecision"><polygon points="-4.5,-2 2.5,-2 4.5,0 -2.5,0" fill="#f4c840" stroke="#555" stroke-width="0.6"/><polygon points="-2.5,0 4.5,0 4.5,2.5 -2.5,2.5" fill="#b08010" stroke="#444" stroke-width="0.6"/><polygon points="-4.5,-2 -2.5,0 -2.5,2.5 -4.5,0.5" fill="#b08010" stroke="#444" stroke-width="0.6"/></g>
<rect x="1127" y="280" width="10" height="20" fill="#000" />
<rect x="1128" y="281" width="8" height="9" fill="#cccccc" />
<rect x="1128" y="281" width="4" height="4" fill="#b0b0b0" />
<rect x="1132" y="285" width="4" height="5" fill="#b0b0b0" />
<rect x="1128" y="290" width="8" height="9" fill="#ff0000" />
<rect x="1161.5" y="286.5" width="9" height="9" fill="#fff" stroke="#4a1848" stroke-width="1"/>
<rect x="1163" y="291" width="6" height="1" fill="#000" />
<rect x="1165.5" y="288.5" width="1" height="6" fill="#000" />
<text x="1178" y="296" font-family="Liberation Sans" font-size="15" font-weight="normal" fill="#04080e" text-anchor="start" textLength="40" lengthAdjust="spacingAndGlyphs" >g1247</text>
<g transform="translate(1057.5 315)" shape-rendering="geometricPrecision"><path d="M-4.8 0.5 Q0 -4 4.8 0.5 Q0 4 -4.8 0.5 Z" fill="#f4f4f4" stroke="#111" stroke-width="1.1"/><circle cx="0" cy="0.6" r="1.8" fill="#000"/><path d="M-3.5 -1.8 L-4.5 -3.2 M-1.5 -2.6 L-2 -4.2 M0.5 -2.8 L0.5 -4.5 M2.2 -2.4 L3 -4 M3.8 -1.6 L4.8 -2.8" stroke="#111" stroke-width="0.9"/></g>
<g transform="translate(1074.5 315)" shape-rendering="geometricPrecision"><path d="M0.5 0 V-2.5 A2.2 2.2 0 0 1 4.5 -2.5 V-1" fill="none" stroke="#444" stroke-width="0.9"/><rect x="-3" y="0" width="6" height="4.5" fill="#f0d868" stroke="#3a3010" stroke-width="0.7"/><rect x="-0.5" y="1.5" width="1.2" height="1.5" fill="#333"/></g>
<g transform="translate(1091 315)" shape-rendering="geometricPrecision"><polygon points="-4.5,-2 2.5,-2 4.5,0 -2.5,0" fill="#f0f0f0" stroke="#555" stroke-width="0.6"/><polygon points="-2.5,0 4.5,0 4.5,2.5 -2.5,2.5" fill="#8a8a8a" stroke="#444" stroke-width="0.6"/><polygon points="-4.5,-2 -2.5,0 -2.5,2.5 -4.5,0.5" fill="#8a8a8a" stroke="#444" stroke-width="0.6"/></g>
<rect x="1127" y="306" width="10" height="20" fill="#000" />
<rect x="1128" y="307" width="8" height="9" fill="#cccccc" />
<rect x="1128" y="307" width="4" height="4" fill="#b0b0b0" />
<rect x="1132" y="311" width="4" height="5" fill="#b0b0b0" />
<rect x="1128" y="316" width="8" height="9" fill="#ff0000" />
<rect x="1145.5" y="312.5" width="9" height="9" fill="#fff" stroke="#4a1848" stroke-width="1"/>
<rect x="1147" y="317" width="6" height="1" fill="#000" />
<rect x="1149.5" y="314.5" width="1" height="6" fill="#000" />
<text x="1162" y="322" font-family="Liberation Sans" font-size="15" font-weight="normal" fill="#04080e" text-anchor="start" textLength="48" lengthAdjust="spacingAndGlyphs" >Layer 1</text>
<rect x="1292" y="147" width="1" height="480" fill="#7dd0e3" />
<rect x="1294" y="120" width="1" height="514" fill="#1cb4e4" />
<rect x="1296" y="120" width="1" height="514" fill="#7dd0e3" />
<path d="M1054.5 474 H1067.5 M1061 467.5 V480.5" stroke="#1a4a7a" stroke-width="3.2"/>
<path d="M1055 474 H1067 M1061 468 V480" stroke="#a8c4ee" stroke-width="1.6"/>
<path d="M1082.5 474 H1095.5" stroke="#1a4a7a" stroke-width="3.2"/>
<path d="M1083 474 H1095" stroke="#a8c4ee" stroke-width="1.6"/>
<g transform="translate(1162 474)"><rect x="-7" y="-7" width="14" height="14" fill="#f4f4f4" stroke="#888" stroke-width="0.8"/><path d="M-2 -3 H5 M1 -0.5 H5 M-2 2 H5 M-2 4.5 H5" stroke="#333" stroke-width="0.8"/><path d="M-5 1 L-1 1 M-5 1 L-3 -1 M-5 1 L-3 3" stroke="#333" stroke-width="0.8"/></g>
<g transform="translate(1189 474)"><polygon points="0,-6 6,0 2.5,0 2.5,6 -2.5,6 -2.5,0 -6,0" fill="url(#garr)" stroke="#3a8010" stroke-width="0.9" shape-rendering="geometricPrecision"/></g>
<rect x="1182" y="466" width="14" height="2.5" fill="#8ad030" stroke="#3a8010" stroke-width="0.6"/>
<g transform="translate(1217 474)"><polygon points="0,-6 6,0 2.5,0 2.5,6 -2.5,6 -2.5,0 -6,0" fill="url(#garr)" stroke="#3a8010" stroke-width="0.9" shape-rendering="geometricPrecision"/></g>
<g transform="translate(1245 474)"><polygon points="0,6 6,0 2.5,0 2.5,-6 -2.5,-6 -2.5,0 -6,0" fill="url(#garr)" stroke="#3a8010" stroke-width="0.9" shape-rendering="geometricPrecision"/></g>
<g transform="translate(1273 474)"><polygon points="0,6 6,0 2.5,0 2.5,-6 -2.5,-6 -2.5,0 -6,0" fill="url(#garr)" stroke="#3a8010" stroke-width="0.9" shape-rendering="geometricPrecision"/></g>
<rect x="1266" y="480" width="14" height="2.5" fill="#8ad030" stroke="#3a8010" stroke-width="0.6"/>
<text x="1051" y="508" font-family="Liberation Sans" font-size="15" font-weight="normal" fill="#04080e" text-anchor="start" textLength="86" lengthAdjust="spacingAndGlyphs" >Blend mode:</text>
<rect x="1146" y="491" width="141" height="25" fill="#d8f0f8" />
<rect x="1146" y="491" width="141" height="2" fill="#3c4246" />
<rect x="1146" y="491" width="2" height="25" fill="#3c4246" />
<rect x="1146" y="515" width="141" height="1" fill="#7dd0e3" />
<rect x="1286" y="491" width="1" height="25" fill="#7dd0e3" />
<text x="1149" y="508" font-family="Liberation Sans" font-size="15" font-weight="normal" fill="#04080e" text-anchor="start" textLength="48" lengthAdjust="spacingAndGlyphs" >Normal</text>
<rect x="1266" y="493" width="19" height="21" fill="#23839d" />
<rect x="1266" y="493" width="19" height="1" fill="#7dd0e3" />
<rect x="1266" y="493" width="1" height="21" fill="#7dd0e3" />
<rect x="1266" y="513" width="19" height="1" fill="#3c4246" />
<rect x="1284" y="493" width="1" height="21" fill="#3c4246" />
<polygon points="1271,501 1280,501 1275.5,506" fill="#000"/>
<rect x="1052" y="521" width="223" height="25" fill="#d8f0f8" />
<rect x="1052" y="521" width="223" height="2" fill="#3c4246" />
<rect x="1052" y="521" width="2" height="25" fill="#3c4246" />
<rect x="1052" y="545" width="223" height="1" fill="#7dd0e3" />
<rect x="1274" y="521" width="1" height="25" fill="#7dd0e3" />
<text x="1057" y="538" font-family="Liberation Sans" font-size="15" font-weight="normal" fill="#04080e" text-anchor="start" textLength="55" lengthAdjust="spacingAndGlyphs" >Blur (%)</text>
<text x="1270" y="538" font-family="Liberation Sans" font-size="15" font-weight="normal" fill="#04080e" text-anchor="end" textLength="22" lengthAdjust="spacingAndGlyphs" >0.0</text>
<rect x="1275" y="521" width="12" height="12" fill="#23839d" />
<rect x="1275" y="521" width="12" height="1" fill="#7dd0e3" />
<rect x="1275" y="521" width="1" height="12" fill="#7dd0e3" />
<rect x="1275" y="532" width="12" height="1" fill="#3c4246" />
<rect x="1286" y="521" width="1" height="12" fill="#3c4246" />
<rect x="1275" y="533" width="12" height="13" fill="#23839d" />
<rect x="1275" y="533" width="12" height="1" fill="#7dd0e3" />
<rect x="1275" y="533" width="1" height="13" fill="#7dd0e3" />
<rect x="1275" y="545" width="12" height="1" fill="#3c4246" />
<rect x="1286" y="533" width="1" height="13" fill="#3c4246" />
<polygon points="1278.5,528.5 1283.5,528.5 1281.0,526.0" fill="#000"/>
<polygon points="1278.5,538.0 1283.5,538.0 1281.0,540.5" fill="#000"/>
<text x="1051" y="572" font-family="Liberation Sans" font-size="15" font-weight="normal" fill="#04080e" text-anchor="start" textLength="53" lengthAdjust="spacingAndGlyphs" >Opacity:</text>
<rect x="1110" y="568" width="83" height="1" fill="#1cb4e4" />
<rect x="1110" y="569" width="83" height="1" fill="#1d4654" />
<rect x="1192" y="553" width="11" height="27" fill="#23839d" />
<rect x="1192" y="553" width="11" height="1" fill="#1cb4e4" />
<rect x="1192" y="553" width="1" height="27" fill="#1cb4e4" />
<rect x="1192" y="579" width="11" height="1" fill="#000" />
<rect x="1202" y="553" width="1" height="27" fill="#000" />
<rect x="1197" y="556" width="1" height="21" fill="#1d4654" />
<rect x="1205" y="555" width="49" height="25" fill="#d8f0f8" />
<rect x="1205" y="555" width="49" height="2" fill="#3c4246" />
<rect x="1205" y="555" width="2" height="25" fill="#3c4246" />
<rect x="1205" y="579" width="49" height="1" fill="#7dd0e3" />
<rect x="1253" y="555" width="1" height="25" fill="#7dd0e3" />
<text x="1209" y="573" font-family="Liberation Sans" font-size="15" font-weight="normal" fill="#04080e" text-anchor="start" textLength="39" lengthAdjust="spacingAndGlyphs" >100.0</text>
<rect x="1254" y="555" width="12" height="12" fill="#23839d" />
<rect x="1254" y="555" width="12" height="1" fill="#7dd0e3" />
<rect x="1254" y="555" width="1" height="12" fill="#7dd0e3" />
<rect x="1254" y="566" width="12" height="1" fill="#3c4246" />
<rect x="1265" y="555" width="1" height="12" fill="#3c4246" />
<rect x="1254" y="567" width="12" height="13" fill="#23839d" />
<rect x="1254" y="567" width="12" height="1" fill="#7dd0e3" />
<rect x="1254" y="567" width="1" height="13" fill="#7dd0e3" />
<rect x="1254" y="579" width="12" height="1" fill="#3c4246" />
<rect x="1265" y="567" width="1" height="13" fill="#3c4246" />
<polygon points="1257.5,562.5 1262.5,562.5 1260.0,560.0" fill="#000"/>
<polygon points="1257.5,572.0 1262.5,572.0 1260.0,574.5" fill="#000"/>
<text x="1270" y="573" font-family="Liberation Sans" font-size="15" font-weight="normal" fill="#04080e" text-anchor="start" textLength="14" lengthAdjust="spacingAndGlyphs" >%</text>
<rect x="1199" y="589" width="85" height="30" fill="#23839d" />
<rect x="1199" y="589" width="85" height="1" fill="#7dd0e3" />
<rect x="1199" y="589" width="1" height="30" fill="#7dd0e3" />
<rect x="1199" y="617" width="85" height="2" fill="#3c4246" />
<rect x="1282" y="589" width="2" height="30" fill="#3c4246" />
<text x="1224" y="610" font-family="Liberation Sans" font-size="15" font-weight="normal" fill="#04080e" text-anchor="start" textLength="34" lengthAdjust="spacingAndGlyphs" >Close</text>
<rect x="1224" y="612" width="9" height="1" fill="#04080e" />
<rect x="1042" y="626" width="251" height="1" fill="#7dd0e3" />
<rect x="1324" y="89" width="1" height="29" fill="#7dd0e3" />
<rect x="1296" y="120" width="31" height="1" fill="#7dd0e3" />
<rect x="1298" y="122" width="28" height="28" fill="url(#hatch)" />
<rect x="1298" y="149" width="28" height="1" fill="#7dd0e3" />
<rect x="1325" y="122" width="1" height="28" fill="#7dd0e3" />
<rect x="1298" y="122" width="28" height="1" fill="#1d4654" />
<rect x="1298" y="122" width="1" height="28" fill="#1d4654" />
<rect x="1298" y="314" width="28" height="28" fill="url(#hatch)" />
<rect x="1298" y="341" width="28" height="1" fill="#7dd0e3" />
<rect x="1325" y="314" width="1" height="28" fill="#7dd0e3" />
<rect x="1298" y="314" width="28" height="1" fill="#1d4654" />
<rect x="1298" y="314" width="1" height="28" fill="#1d4654" />
<rect x="1298" y="398" width="28" height="27" fill="url(#hatch)" />
<rect x="1298" y="424" width="28" height="1" fill="#7dd0e3" />
<rect x="1325" y="398" width="1" height="27" fill="#7dd0e3" />
<rect x="1298" y="398" width="28" height="1" fill="#1d4654" />
<rect x="1298" y="398" width="1" height="27" fill="#1d4654" />
<rect x="1298" y="426" width="28" height="27" fill="url(#hatch)" />
<rect x="1298" y="452" width="28" height="1" fill="#7dd0e3" />
<rect x="1325" y="426" width="1" height="27" fill="#7dd0e3" />
<rect x="1298" y="426" width="28" height="1" fill="#1d4654" />
<rect x="1298" y="426" width="1" height="27" fill="#1d4654" />
<rect x="1298" y="494" width="28" height="27" fill="url(#hatch)" />
<rect x="1298" y="520" width="28" height="1" fill="#7dd0e3" />
<rect x="1325" y="494" width="1" height="27" fill="#7dd0e3" />
<rect x="1298" y="494" width="28" height="1" fill="#1d4654" />
<rect x="1298" y="494" width="1" height="27" fill="#1d4654" />
<rect x="1298" y="550" width="28" height="27" fill="url(#hatch)" />
<rect x="1298" y="576" width="28" height="1" fill="#7dd0e3" />
<rect x="1325" y="550" width="1" height="27" fill="#7dd0e3" />
<rect x="1298" y="550" width="28" height="1" fill="#1d4654" />
<rect x="1298" y="550" width="1" height="27" fill="#1d4654" />
<rect x="1303" y="155" width="18" height="1" fill="#1d4654" />
<rect x="1303" y="156" width="18" height="1" fill="#1cb4e4" />
<rect x="1303" y="307" width="18" height="1" fill="#1d4654" />
<rect x="1303" y="308" width="18" height="1" fill="#1cb4e4" />
<rect x="1303" y="486" width="18" height="1" fill="#1d4654" />
<rect x="1303" y="487" width="18" height="1" fill="#1cb4e4" />
<g transform="translate(1304 127)" shape-rendering="geometricPrecision"><path d="M3.5 3.5 L11 10.5" stroke="#000" stroke-width="1.1"/><path d="M8.5 11 L12 12 L11 8.5 Z" fill="#000"/><rect x="2" y="2" width="3" height="3" fill="#8090ff" stroke="#1010f0" stroke-width="1.2" transform="rotate(45 3.5 3.5)"/><rect x="11.5" y="11.5" width="3" height="3" fill="#6a9ac0" stroke="#1a8a30" stroke-width="1.2" transform="rotate(45 13 13)"/></g>
<g transform="translate(1304 169)" shape-rendering="geometricPrecision"><path d="M3.5 3.5 L11 10.5" stroke="#000" stroke-width="1.1"/><path d="M8.5 11 L12 12 L11 8.5 Z" fill="#000"/><rect x="2" y="2" width="3" height="3" fill="#8090ff" stroke="#1010f0" stroke-width="1.2" transform="rotate(45 3.5 3.5)"/><rect x="11.5" y="11.5" width="3" height="3" fill="#6a9ac0" stroke="#1a8a30" stroke-width="1.2" transform="rotate(45 13 13)"/></g>
<g transform="translate(1304 196)" shape-rendering="geometricPrecision"><path d="M12.5 1 V13.5 H1" fill="none" stroke="#8a9a80" stroke-width="1" stroke-dasharray="1 1"/></g>
<g transform="translate(1304 224)" shape-rendering="geometricPrecision"><path d="M12.5 1 V11 M1 12.5 H10" fill="none" stroke="#8a9a80" stroke-width="1" stroke-dasharray="1 1"/><rect x="10" y="10" width="5" height="5" fill="#a0a890" stroke="#556" stroke-width="0.8" transform="rotate(45 12.5 12.5)"/></g>
<g transform="translate(1304 250)" shape-rendering="geometricPrecision"><path d="M12.5 8 V13.5 H1" fill="none" stroke="#111" stroke-width="1" stroke-dasharray="1 1"/><rect x="10.5" y="3" width="4" height="4" fill="#a0a890" stroke="#556" stroke-width="0.8" transform="rotate(45 12.5 5)"/></g>
<g transform="translate(1304 279)" shape-rendering="geometricPrecision"><path d="M12.5 1 V13.5 H1" fill="none" stroke="#111" stroke-width="1" stroke-dasharray="1 1"/><rect x="2.5" y="4.5" width="3" height="3" fill="#a0a890" stroke="#556" stroke-width="0.7" transform="rotate(45 4 6)"/></g>
<g transform="translate(1304 320)" shape-rendering="geometricPrecision"><path d="M3.5 3.5 L11 10.5" stroke="#000" stroke-width="1.1"/><path d="M8.5 11 L12 12 L11 8.5 Z" fill="#000"/><rect x="2" y="2" width="3" height="3" fill="#8090ff" stroke="#1010f0" stroke-width="1.2" transform="rotate(45 3.5 3.5)"/><rect x="11.5" y="11.5" width="3" height="3" fill="#6a9ac0" stroke="#1a8a30" stroke-width="1.2" transform="rotate(45 13 13)"/></g>
<g transform="translate(1304 348)" shape-rendering="geometricPrecision"><path d="M1 2 Q9 0 12 6 Q13 11 8 13" fill="none" stroke="#1a8a30" stroke-width="1.4"/></g>
<g transform="translate(1304 376)" shape-rendering="geometricPrecision"><path d="M1 14 L15 2 M1 9 L15 6" stroke="#8a7a70" stroke-width="1"/><circle cx="8" cy="8" r="2.3" fill="none" stroke="#1a9a30" stroke-width="1.3"/></g>
<g transform="translate(1304 404)" shape-rendering="geometricPrecision"><path d="M2 1 Q10 2 11 10 L9 14 M14 8 L9 14" fill="none" stroke="#8a7a70" stroke-width="1"/><rect x="6" y="10" width="5" height="5" fill="none" stroke="#1a9a30" stroke-width="1.3" transform="rotate(20 8.5 12.5)"/></g>
<g transform="translate(1304 431)" shape-rendering="geometricPrecision"><path d="M1 3 H8 Q14 6 12 12 L10 15" fill="none" stroke="#8a7a70" stroke-width="1"/><rect x="5" y="2" width="5" height="5" fill="none" stroke="#1a9a30" stroke-width="1.3"/></g>
<g transform="translate(1304 460)" shape-rendering="geometricPrecision"><path d="M4 10 L8 2 M9 10 L13 2" stroke="#c02020" stroke-width="1.2"/><circle cx="3" cy="13" r="2" fill="none" stroke="#1a9a30" stroke-width="1.2"/><circle cx="9" cy="7" r="2" fill="none" stroke="#1a9a30" stroke-width="1.2"/></g>
<g transform="translate(1304 500)" shape-rendering="geometricPrecision"><path d="M3.5 3.5 L11 10.5" stroke="#000" stroke-width="1.1"/><path d="M8.5 11 L12 12 L11 8.5 Z" fill="#000"/><rect x="2" y="2" width="3" height="3" fill="#8090ff" stroke="#1010f0" stroke-width="1.2" transform="rotate(45 3.5 3.5)"/><rect x="11.5" y="11.5" width="3" height="3" fill="#6a9ac0" stroke="#1a8a30" stroke-width="1.2" transform="rotate(45 13 13)"/></g>
<g transform="translate(1304 527)" shape-rendering="geometricPrecision"><path d="M14.5 3 V14.5 H3" fill="none" stroke="#8a7a70" stroke-width="1"/><circle cx="7" cy="7" r="2" fill="none" stroke="#1a9a30" stroke-width="1.2"/></g>
<g transform="translate(1304 555)" shape-rendering="geometricPrecision"><path d="M4 8 H10 M7 5 V11" stroke="#222" stroke-width="1.2"/><path d="M13 1 V14 M1 14 H13" fill="none" stroke="#222" stroke-width="1" stroke-dasharray="1 1"/><path d="M12 12 L14 14 L12 15" fill="#000"/></g>
<g transform="translate(1304 583)" shape-rendering="geometricPrecision"><path d="M2 14 L7 1 H10 L15 14 H12 L11 11 H6 L5 14 Z M6.8 8.5 H10.2 L8.5 4 Z" fill="#111"/><rect x="2" y="11" width="3" height="3" fill="none" stroke="#1a9a30" stroke-width="1.2" transform="rotate(45 3.5 12.5)"/></g>
<polygon points="1310,614 1310,622 1314.5,618" fill="#000"/>
<rect x="7" y="636" width="1311" height="1" fill="#101418" />
<rect x="9" y="637" width="14" height="14" fill="#fff" />
<path d="M9.5 637.5 L22.5 650.5 M22.5 637.5 L9.5 650.5" stroke="#a02020" stroke-width="1.3" shape-rendering="geometricPrecision"/>
<rect x="8" y="637" width="1" height="14" fill="#000" />
<rect x="23" y="637" width="14" height="14" fill="#000000" />
<rect x="37" y="637" width="14" height="14" fill="#1a1a1a" />
<rect x="51" y="637" width="14" height="14" fill="#333333" />
<rect x="65" y="637" width="14" height="14" fill="#4d4d4d" />
<rect x="79" y="637" width="14" height="14" fill="#666666" />
<rect x="93" y="637" width="14" height="14" fill="#808080" />
<rect x="107" y="637" width="14" height="14" fill="#999999" />
<rect x="121" y="637" width="14" height="14" fill="#b3b3b3" />
<rect x="135" y="637" width="14" height="14" fill="#cccccc" />
<rect x="149" y="637" width="14" height="14" fill="#e6e6e6" />
<rect x="163" y="637" width="14" height="14" fill="#ececec" />
<rect x="177" y="637" width="14" height="14" fill="#f2f2f2" />
<rect x="191" y="637" width="14" height="14" fill="#f9f9f9" />
<rect x="205" y="637" width="14" height="14" fill="#ffffff" />
<rect x="219" y="637" width="14" height="14" fill="#800000" />
<rect x="233" y="637" width="14" height="14" fill="#ff0000" />
<rect x="247" y="637" width="14" height="14" fill="#808000" />
<rect x="261" y="637" width="14" height="14" fill="#ffff00" />
<rect x="275" y="637" width="14" height="14" fill="#008000" />
<rect x="289" y="637" width="14" height="14" fill="#00ff00" />
<rect x="303" y="637" width="14" height="14" fill="#008080" />
<rect x="317" y="637" width="14" height="14" fill="#00ffff" />
<rect x="331" y="637" width="14" height="14" fill="#000080" />
<rect x="345" y="637" width="14" height="14" fill="#0000ff" />
<rect x="359" y="637" width="14" height="14" fill="#800080" />
<rect x="373" y="637" width="14" height="14" fill="#ff00ff" />
<rect x="387" y="637" width="14" height="14" fill="#2b0000" />
<rect x="401" y="637" width="14" height="14" fill="#550000" />
<rect x="415" y="637" width="14" height="14" fill="#800000" />
<rect x="429" y="637" width="14" height="14" fill="#aa0000" />
<rect x="443" y="637" width="14" height="14" fill="#d40000" />
<rect x="457" y="637" width="14" height="14" fill="#ff0000" />
<rect x="471" y="637" width="14" height="14" fill="#ff2a2a" />
<rect x="485" y="637" width="14" height="14" fill="#ff5555" />
<rect x="499" y="637" width="14" height="14" fill="#ff8080" />
<rect x="513" y="637" width="14" height="14" fill="#ffaaaa" />
<rect x="527" y="637" width="14" height="14" fill="#ffd5d5" />
<rect x="541" y="637" width="14" height="14" fill="#280b0b" />
<rect x="555" y="637" width="14" height="14" fill="#501616" />
<rect x="569" y="637" width="14" height="14" fill="#782121" />
<rect x="583" y="637" width="14" height="14" fill="#a02c2c" />
<rect x="597" y="637" width="14" height="14" fill="#c83737" />
<rect x="611" y="637" width="14" height="14" fill="#d35f5f" />
<rect x="625" y="637" width="14" height="14" fill="#de8787" />
<rect x="639" y="637" width="14" height="14" fill="#e9afaf" />
<rect x="653" y="637" width="14" height="14" fill="#f4d7d7" />
<rect x="667" y="637" width="14" height="14" fill="#241c1c" />
<rect x="681" y="637" width="14" height="14" fill="#483737" />
<rect x="695" y="637" width="14" height="14" fill="#6c5353" />
<rect x="709" y="637" width="14" height="14" fill="#916f6f" />
<rect x="723" y="637" width="14" height="14" fill="#ac9393" />
<rect x="737" y="637" width="14" height="14" fill="#c8b7b7" />
<rect x="751" y="637" width="14" height="14" fill="#e3dbdb" />
<rect x="765" y="637" width="14" height="14" fill="#2b1100" />
<rect x="779" y="637" width="14" height="14" fill="#552200" />
<rect x="793" y="637" width="14" height="14" fill="#803300" />
<rect x="807" y="637" width="14" height="14" fill="#aa4400" />
<rect x="821" y="637" width="14" height="14" fill="#d45500" />
<rect x="835" y="637" width="14" height="14" fill="#ff6600" />
<rect x="849" y="637" width="14" height="14" fill="#ff7f2a" />
<rect x="863" y="637" width="14" height="14" fill="#ff9955" />
<rect x="877" y="637" width="14" height="14" fill="#ffb380" />
<rect x="891" y="637" width="14" height="14" fill="#ffccaa" />
<rect x="905" y="637" width="14" height="14" fill="#ffe6d5" />
<rect x="919" y="637" width="14" height="14" fill="#28170b" />
<rect x="933" y="637" width="14" height="14" fill="#502d16" />
<rect x="947" y="637" width="14" height="14" fill="#784421" />
<rect x="961" y="637" width="14" height="14" fill="#a05a2c" />
<rect x="975" y="637" width="14" height="14" fill="#c87137" />
<rect x="989" y="637" width="14" height="14" fill="#d38d5f" />
<rect x="1003" y="637" width="14" height="14" fill="#deaa87" />
<rect x="1017" y="637" width="14" height="14" fill="#e9c6af" />
<rect x="1031" y="637" width="14" height="14" fill="#f4e3d7" />
<rect x="1045" y="637" width="14" height="14" fill="#241f1c" />
<rect x="1059" y="637" width="14" height="14" fill="#483e37" />
<rect x="1073" y="637" width="14" height="14" fill="#6c5d53" />
<rect x="1087" y="637" width="14" height="14" fill="#917c6f" />
<rect x="1101" y="637" width="14" height="14" fill="#ac9d93" />
<rect x="1115" y="637" width="14" height="14" fill="#c8beb7" />
<rect x="1129" y="637" width="14" height="14" fill="#e3dedb" />
<rect x="1143" y="637" width="14" height="14" fill="#2b2200" />
<rect x="1157" y="637" width="14" height="14" fill="#554400" />
<rect x="1171" y="637" width="14" height="14" fill="#806600" />
<rect x="1185" y="637" width="14" height="14" fill="#aa8800" />
<rect x="1199" y="637" width="14" height="14" fill="#d4aa00" />
<rect x="1213" y="637" width="14" height="14" fill="#ffcc00" />
<rect x="1227" y="637" width="14" height="14" fill="#ffd42a" />
<rect x="1241" y="637" width="14" height="14" fill="#ffdd55" />
<rect x="1255" y="637" width="14" height="14" fill="#ffe680" />
<rect x="1269" y="637" width="14" height="14" fill="#ffeeaa" />
<rect x="1283" y="637" width="14" height="14" fill="#fff6d5" />
<rect x="1297" y="637" width="14" height="14" fill="#28220b" />
<rect x="1311" y="637" width="6" height="14" fill="#504416" />
<rect x="1317" y="636" width="1" height="17" fill="#1cb4e4" />
<polygon points="1325,637 1325,645 1320,641" fill="#000"/>
<rect x="7" y="651" width="1312" height="2" fill="#1cb4e4" />
<rect x="8" y="653" width="1284" height="17" fill="url(#hatch)" />
<rect x="34" y="653" width="272" height="16" fill="#23839d" />
<rect x="34" y="669" width="272" height="1" fill="#000" />
<rect x="305" y="653" width="1" height="17" fill="#000" />
<rect x="34" y="653" width="272" height="1" fill="#1cb4e4" />
<rect x="8" y="653" width="27" height="22" fill="#23839d" />
<rect x="8" y="653" width="27" height="1" fill="#7dd0e3" />
<rect x="8" y="653" width="1" height="22" fill="#7dd0e3" />
<rect x="8" y="674" width="27" height="1" fill="#3c4246" />
<rect x="34" y="653" width="1" height="22" fill="#3c4246" />
<polygon points="24,657 24,671 16,664" fill="#1a5a6a"/>
<rect x="24" y="657" width="1" height="14" fill="#7dd0e3" />
<rect x="1292" y="653" width="27" height="17" fill="#23839d" />
<rect x="1292" y="653" width="27" height="1" fill="#23839d" />
<rect x="1292" y="653" width="1" height="17" fill="#23839d" />
<rect x="1292" y="669" width="27" height="1" fill="#3c4246" />
<rect x="1318" y="653" width="1" height="17" fill="#3c4246" />
<polygon points="1302,654 1302,669 1310,661.5" fill="#000"/>
<text x="9" y="681" font-family="Liberation Sans" font-size="12" font-weight="normal" fill="#04080e" text-anchor="start" textLength="21" lengthAdjust="spacingAndGlyphs" >Fill:</text>
<text x="9" y="694" font-family="Liberation Sans" font-size="12" font-weight="normal" fill="#04080e" text-anchor="start" textLength="33" lengthAdjust="spacingAndGlyphs" >Stroke:</text>
<text x="72" y="681" font-family="Liberation Sans" font-size="12" font-weight="bold" fill="#04080e" text-anchor="start" textLength="33" lengthAdjust="spacingAndGlyphs" >Unset</text>
<text x="72" y="694" font-family="Liberation Sans" font-size="12" font-weight="bold" fill="#04080e" text-anchor="start" textLength="33" lengthAdjust="spacingAndGlyphs" >Unset</text>
<text x="132" y="687" font-family="Liberation Sans" font-size="13" font-weight="normal" fill="#04080e" text-anchor="start" textLength="12" lengthAdjust="spacingAndGlyphs" >O:</text>
<rect x="148" y="673" width="36" height="20" fill="#d8f0f8" />
<rect x="148" y="673" width="36" height="2" fill="#3c4246" />
<rect x="148" y="673" width="2" height="20" fill="#3c4246" />
<rect x="148" y="692" width="36" height="1" fill="#7dd0e3" />
<rect x="183" y="673" width="1" height="20" fill="#7dd0e3" />
<text x="151" y="688" font-family="Liberation Sans" font-size="13" font-weight="normal" fill="#04080e" text-anchor="start" >0</text>
<rect x="183" y="673" width="11" height="10" fill="#23839d" />
<rect x="183" y="673" width="11" height="1" fill="#7dd0e3" />
<rect x="183" y="673" width="1" height="10" fill="#7dd0e3" />
<rect x="183" y="682" width="11" height="1" fill="#3c4246" />
<rect x="193" y="673" width="1" height="10" fill="#3c4246" />
<rect x="183" y="683" width="11" height="10" fill="#23839d" />
<rect x="183" y="683" width="11" height="1" fill="#7dd0e3" />
<rect x="183" y="683" width="1" height="10" fill="#7dd0e3" />
<rect x="183" y="692" width="11" height="1" fill="#3c4246" />
<rect x="193" y="683" width="1" height="10" fill="#3c4246" />
<polygon points="186.0,679.5 191.0,679.5 188.5,677.0" fill="#000"/>
<polygon points="186.0,687.0 191.0,687.0 188.5,689.5" fill="#000"/>
<rect x="198" y="670" width="1" height="27" fill="#7dd0e3" />
<g transform="translate(210 684)"><ellipse cx="0" cy="0" rx="4" ry="2" fill="#ddd" stroke="#444" stroke-width="0.8" shape-rendering="geometricPrecision"/><circle r="1.2" fill="#222"/></g>
<g transform="translate(232 684)"><rect x="-3" y="-1" width="6" height="4" fill="#e8e0c0" stroke="#666" stroke-width="0.5"/><path d="M-2 -1 V-3 A2 2 0 0 1 2 -3" fill="none" stroke="#888" stroke-width="0.8"/></g>
<rect x="243" y="671" width="88" height="24" fill="#d8f0f8" />
<rect x="243" y="671" width="88" height="2" fill="#3c4246" />
<rect x="243" y="671" width="2" height="24" fill="#3c4246" />
<rect x="243" y="694" width="88" height="1" fill="#7dd0e3" />
<rect x="330" y="671" width="1" height="24" fill="#7dd0e3" />
<text x="252" y="687" font-family="Liberation Sans" font-size="14" font-weight="normal" fill="#04080e" text-anchor="start" textLength="36" lengthAdjust="spacingAndGlyphs" >(root)</text>
<rect x="311" y="673" width="18" height="20" fill="#23839d" />
<rect x="311" y="673" width="18" height="1" fill="#7dd0e3" />
<rect x="311" y="673" width="1" height="20" fill="#7dd0e3" />
<rect x="311" y="692" width="18" height="1" fill="#3c4246" />
<rect x="328" y="673" width="1" height="20" fill="#3c4246" />
<polygon points="316,681 324,681 320,686" fill="#000"/>
<text x="334" y="688.5" font-family="Liberation Sans" font-size="14.8" font-weight="bold" fill="#04080e" text-anchor="start" textLength="44" lengthAdjust="spacingAndGlyphs" >Group</text>
<text x="384" y="688.5" font-family="Liberation Sans" font-size="14.8" font-weight="normal" fill="#04080e" text-anchor="start" textLength="13" lengthAdjust="spacingAndGlyphs" >of</text>
<text x="403" y="688.5" font-family="Liberation Sans" font-size="14.8" font-weight="bold" fill="#04080e" text-anchor="start" textLength="9" lengthAdjust="spacingAndGlyphs" >2</text>
<text x="417" y="688.5" font-family="Liberation Sans" font-size="14.8" font-weight="normal" fill="#04080e" text-anchor="start" textLength="401.5" lengthAdjust="spacingAndGlyphs" >objects in root. Click selection to toggle scale/rotation handles.</text>
<rect x="1186" y="670" width="1" height="27" fill="#7dd0e3" />
<text x="1188" y="680.5" font-family="Liberation Mono" font-size="13" font-weight="normal" fill="#04080e" text-anchor="start" textLength="12" lengthAdjust="spacingAndGlyphs" stroke="#0a1020" stroke-width="0.25">X:</text>
<text x="1209" y="680.5" font-family="Liberation Mono" font-size="13" font-weight="normal" fill="#04080e" text-anchor="start" textLength="40" lengthAdjust="spacingAndGlyphs" stroke="#0a1020" stroke-width="0.25">-96.00</text>
<text x="1188" y="693" font-family="Liberation Mono" font-size="13" font-weight="normal" fill="#04080e" text-anchor="start" textLength="12" lengthAdjust="spacingAndGlyphs" stroke="#0a1020" stroke-width="0.25">Y:</text>
<text x="1209" y="693" font-family="Liberation Mono" font-size="13" font-weight="normal" fill="#04080e" text-anchor="start" textLength="40" lengthAdjust="spacingAndGlyphs" stroke="#0a1020" stroke-width="0.25">510.00</text>
<text x="1258" y="687" font-family="Liberation Sans" font-size="13" font-weight="normal" fill="#04080e" text-anchor="start" textLength="11" lengthAdjust="spacingAndGlyphs" >Z:</text>
<rect x="1272" y="673" width="45" height="19" fill="#d8f0f8" />
<rect x="1272" y="673" width="45" height="2" fill="#3c4246" />
<rect x="1272" y="673" width="2" height="19" fill="#3c4246" />
<rect x="1272" y="691" width="45" height="1" fill="#7dd0e3" />
<rect x="1316" y="673" width="1" height="19" fill="#7dd0e3" />
<rect x="1272" y="691" width="45" height="1" fill="#7dd0e3" />
<text x="1279" y="686.5" font-family="Liberation Sans" font-size="13" font-weight="normal" fill="#04080e" text-anchor="start" textLength="28" lengthAdjust="spacingAndGlyphs" >100%</text>
<rect x="1317" y="673" width="10" height="10" fill="#23839d" />
<rect x="1317" y="673" width="10" height="1" fill="#7dd0e3" />
<rect x="1317" y="673" width="1" height="10" fill="#7dd0e3" />
<rect x="1317" y="682" width="10" height="1" fill="#3c4246" />
<rect x="1326" y="673" width="1" height="10" fill="#3c4246" />
<rect x="1317" y="683" width="10" height="10" fill="#23839d" />
<rect x="1317" y="683" width="10" height="1" fill="#7dd0e3" />
<rect x="1317" y="683" width="1" height="10" fill="#7dd0e3" />
<rect x="1317" y="692" width="10" height="1" fill="#3c4246" />
<rect x="1326" y="683" width="1" height="10" fill="#3c4246" />
<polygon points="1319.5,679.5 1324.5,679.5 1322.0,677.0" fill="#000"/>
<polygon points="1319.5,687.0 1324.5,687.0 1322.0,689.5" fill="#000"/>
</svg></body></html>
